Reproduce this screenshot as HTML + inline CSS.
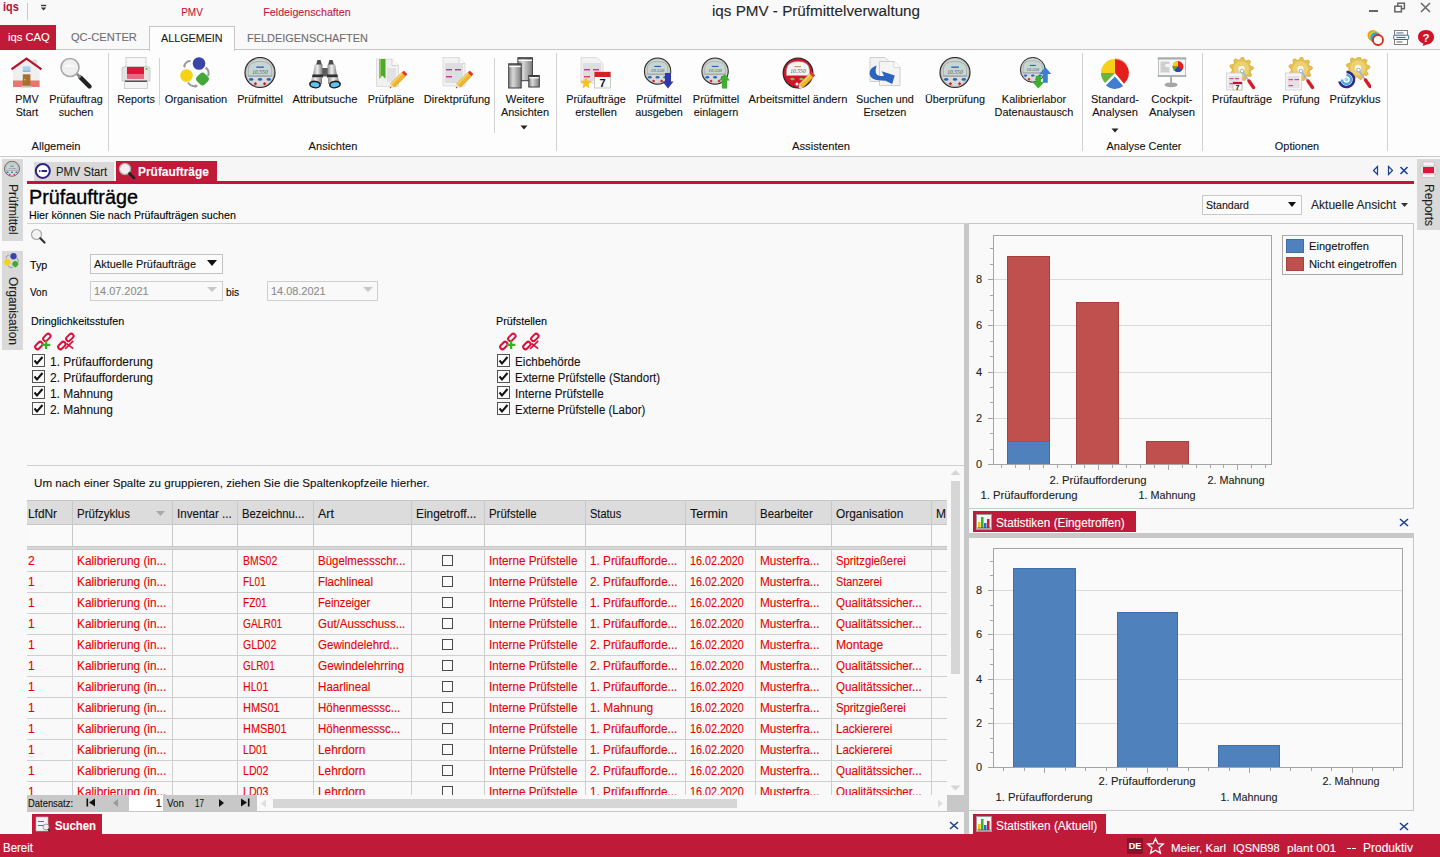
<!DOCTYPE html><html><head><meta charset="utf-8"><style>
html,body{margin:0;padding:0;}
body{width:1440px;height:857px;position:relative;overflow:hidden;background:#f9f9f9;font-family:"Liberation Sans", sans-serif;}
.t{position:absolute;white-space:nowrap;-webkit-text-stroke:0.1px currentColor;}
.r{position:absolute;}
</style></head><body>
<div class="r" style="left:0px;top:0px;width:1440px;height:49px;background:#f9f9f9;"></div>
<div class="r" style="left:0px;top:49px;width:1440px;height:1px;background:#c6c6c6;"></div>
<div class="r" style="left:0px;top:50px;width:1440px;height:106px;background:#fdfdfd;"></div>
<div class="r" style="left:0px;top:156px;width:1440px;height:1px;background:#c8c8c8;"></div>
<div class="t" style="left:2.8px;top:1.23px;font-size:12.000px;line-height:12.000px;color:#b01538;font-weight:bold;transform: scaleX(0.9052);transform-origin:left center;">iqs</div>
<div class="r" style="left:27px;top:3px;width:1px;height:17px;background:#c8c8c8;"></div>
<svg class="r" style="left:40px;top:4px;" width="8" height="8" viewBox="0 0 8 8"><rect x="1" y="0.8" width="5.2" height="1.4" fill="#333c44"/><path d="M0.8 3.6 H6.4 L3.6 6.6Z" fill="#333c44"/></svg>
<div class="t" style="left:192px;top:7.06px;font-size:11.000px;line-height:11.000px;color:#c01a39;transform:translateX(-50%) scaleX(0.9099);transform-origin:center center;">PMV</div>
<div class="t" style="left:307px;top:7.06px;font-size:11.000px;line-height:11.000px;color:#c01a39;transform:translateX(-50%) scaleX(0.9721);transform-origin:center center;">Feldeigenschaften</div>
<div class="t" style="left:815.8px;top:2.58px;font-size:15.200px;line-height:15.200px;color:#262626;transform:translateX(-50%) scaleX(1.0023);transform-origin:center center;">iqs PMV - Prüfmittelverwaltung</div>
<div class="r" style="left:1369px;top:10px;width:9px;height:2px;background:#666;"></div>
<svg class="r" style="left:1393px;top:1px;" width="14" height="12" viewBox="0 0 14 12"><rect x="4.8" y="2.2" width="6.6" height="5.5" fill="none" stroke="#666" stroke-width="1.5"/><rect x="1.8" y="5.2" width="6.6" height="5.6" fill="#f9f9f9" stroke="#666" stroke-width="1.5"/></svg>
<svg class="r" style="left:1420px;top:2px;" width="11" height="11" viewBox="0 0 11 11"><path d="M1 1 L10 10 M10 1 L1 10" stroke="#666" stroke-width="1.5"/></svg>
<svg class="r" style="left:1367px;top:29px;" width="18" height="18" viewBox="0 0 18 18"><circle cx="6" cy="6.5" r="5.5" fill="#f39c12"/><circle cx="7.5" cy="7.5" r="5.5" fill="#c4d42c"/><circle cx="8.8" cy="8.8" r="5.5" fill="#2fa8d8"/><circle cx="11" cy="11" r="5" fill="#fff" stroke="#e3261b" stroke-width="1.8"/></svg>
<svg class="r" style="left:1393px;top:29px;" width="17" height="17" viewBox="0 0 17 17"><rect x="1.5" y="1.5" width="13" height="14" fill="#fff" stroke="#808080" stroke-width="1"/><rect x="0.7" y="6.2" width="15" height="4.3" rx="1" fill="#eef4fb" stroke="#3a6494" stroke-width="1"/><rect x="3.5" y="3.5" width="7" height="0.9" fill="#555"/><rect x="3.5" y="8" width="9" height="0.9" fill="#555"/><rect x="3.5" y="12.5" width="6" height="0.9" fill="#555"/></svg>
<svg class="r" style="left:1417px;top:29px;" width="18" height="18" viewBox="0 0 18 18"><path d="M9 1 C14 1 17 4 17 8 C17 12 14 15 10 15.5 L5.5 17 L6.5 14.8 C3 13.5 1 11 1 8 C1 4 4 1 9 1Z" fill="#d3122a"/><text x="9" y="13" font-family="Liberation Sans" font-weight="bold" font-size="11.5" fill="#fff" text-anchor="middle">?</text></svg>
<div class="r" style="left:0px;top:25px;width:56px;height:25px;background:#c01a39;"></div>
<div class="t" style="left:7.7px;top:32.32px;font-size:11.300px;line-height:11.300px;color:#ffffff;transform: scaleX(0.9933);transform-origin:left center;">iqs CAQ</div>
<div class="t" style="left:70.8px;top:32.48px;font-size:11.100px;line-height:11.100px;color:#6e6e6e;transform: scaleX(0.9986);transform-origin:left center;">QC-CENTER</div>
<div class="r" style="left:149px;top:26px;width:86px;height:24px;background:#fdfdfd;box-sizing:border-box;border:1px solid #c6c6c6;border-bottom:none;height:25px;"></div>
<div class="t" style="left:160.8px;top:32.65px;font-size:10.900px;line-height:10.900px;color:#1a1a1a;transform: scaleX(0.9887);transform-origin:left center;">ALLGEMEIN</div>
<div class="t" style="left:246.7px;top:32.61px;font-size:10.950px;line-height:10.950px;color:#6e6e6e;transform: scaleX(0.9994);transform-origin:left center;">FELDEIGENSCHAFTEN</div>
<div class="r" style="left:108px;top:53px;width:1px;height:98px;background:#d2d2d2;"></div>
<div class="r" style="left:159px;top:58px;width:1px;height:47px;background:#d2d2d2;"></div>
<div class="r" style="left:494px;top:58px;width:1px;height:75px;background:#d2d2d2;"></div>
<div class="r" style="left:556px;top:53px;width:1px;height:98px;background:#d2d2d2;"></div>
<div class="r" style="left:1082px;top:53px;width:1px;height:98px;background:#d2d2d2;"></div>
<div class="r" style="left:1202px;top:53px;width:1px;height:98px;background:#d2d2d2;"></div>
<div class="r" style="left:1387px;top:53px;width:1px;height:98px;background:#d2d2d2;"></div>
<div class="t" style="left:56px;top:140.65px;font-size:11.500px;line-height:11.500px;color:#111;transform:translateX(-50%) scaleX(0.9721);transform-origin:center center;">Allgemein</div>
<div class="t" style="left:333px;top:140.65px;font-size:11.500px;line-height:11.500px;color:#111;transform:translateX(-50%) scaleX(0.9652);transform-origin:center center;">Ansichten</div>
<div class="t" style="left:821px;top:140.65px;font-size:11.500px;line-height:11.500px;color:#111;transform:translateX(-50%) scaleX(0.9754);transform-origin:center center;">Assistenten</div>
<div class="t" style="left:1143.5px;top:140.65px;font-size:11.500px;line-height:11.500px;color:#111;transform:translateX(-50%) scaleX(0.9539);transform-origin:center center;">Analyse Center</div>
<div class="t" style="left:1296.6px;top:140.65px;font-size:11.500px;line-height:11.500px;color:#111;transform:translateX(-50%) scaleX(0.9481);transform-origin:center center;">Optionen</div>
<svg class="r" style="left:11px;top:57px;" width="34" height="34" viewBox="0 0 34 34"><path d="M2 12.5 V30 H28.6 V12.5 L15.5 3Z" fill="#efefef"/>
<rect x="2" y="23.5" width="26.6" height="6.5" fill="#e9766c"/>
<rect x="21.5" y="2.5" width="4.5" height="6" fill="#dedede"/>
<path d="M0.5 12.3 L15.5 1.6 L30.5 12.3" fill="none" stroke="#b7142e" stroke-width="2.2" stroke-linejoin="miter"/>
<rect x="11.8" y="9.3" width="7.6" height="5.3" fill="#a5d4f2"/><rect x="11.8" y="13.6" width="7.6" height="1.2" fill="#9aa"/>
<rect x="11.8" y="17.3" width="7.6" height="11.5" fill="#a4712e"/><rect x="13.3" y="22" width="1" height="1.5" fill="#f0d040"/>
<rect x="10.5" y="28.8" width="10" height="1.8" fill="#c4c4c4"/></svg>
<div class="t" style="left:26.6px;top:94.15px;font-size:11.500px;line-height:11.500px;color:#111;transform:translateX(-50%) scaleX(0.9346);transform-origin:center center;">PMV</div>
<div class="t" style="left:26.6px;top:106.95px;font-size:11.500px;line-height:11.500px;color:#111;transform:translateX(-50%) scaleX(0.9346);transform-origin:center center;">Start</div>
<svg class="r" style="left:60px;top:57px;" width="34" height="34" viewBox="0 0 34 34"><circle cx="10" cy="10.5" r="9" fill="#efefef" stroke="#a9a9a9" stroke-width="1.6"/>
<path d="M3 10 Q10 4 17 10" fill="#fafafa" opacity="0.8"/>
<path d="M20.5 20.5 L29.5 29.5" stroke="#222" stroke-width="4.4" stroke-linecap="round"/>
<path d="M17 17 L20.5 20.5" stroke="#888" stroke-width="2.6"/></svg>
<div class="t" style="left:75.7px;top:94.15px;font-size:11.500px;line-height:11.500px;color:#111;transform:translateX(-50%) scaleX(0.9402);transform-origin:center center;">Prüfauftrag</div>
<div class="t" style="left:75.7px;top:106.95px;font-size:11.500px;line-height:11.500px;color:#111;transform:translateX(-50%) scaleX(0.9329);transform-origin:center center;">suchen</div>
<svg class="r" style="left:121px;top:57px;" width="34" height="34" viewBox="0 0 34 34"><rect x="5" y="0.5" width="20" height="11" fill="#f8f8f8" stroke="#c8c8c8" stroke-width="0.8"/>
<path d="M1 12 Q0 10 4 9.5 H26 Q30 10 29 12 V24 H1Z" fill="#e3e3e3" stroke="#c4c4c4" stroke-width="0.8"/>
<rect x="6" y="10" width="17" height="12" fill="#e0133a"/>
<rect x="6" y="17" width="17" height="5" fill="#e66a80"/>
<circle cx="25.5" cy="12" r="1" fill="#3bc43b"/>
<rect x="3.5" y="24" width="23" height="7.5" fill="#f4f4f4" stroke="#c8c8c8" stroke-width="0.8"/>
<rect x="4" y="23.5" width="22" height="1.5" fill="#555"/></svg>
<div class="t" style="left:136.2px;top:94.15px;font-size:11.500px;line-height:11.500px;color:#111;transform:translateX(-50%) scaleX(0.9310);transform-origin:center center;">Reports</div>
<svg class="r" style="left:180px;top:57px;" width="34" height="34" viewBox="0 0 34 34"><circle cx="19" cy="6.5" r="6.3" fill="#3a43a8"/>
<circle cx="6.5" cy="18.5" r="6.3" fill="#f5d214"/>
<rect x="17" y="16.5" width="11" height="11" rx="3.5" transform="rotate(45 22.5 22)" fill="#44a838"/>
<path d="M4 9 Q6 4 10.5 4" fill="none" stroke="#9a9a9a" stroke-width="2"/><path d="M3 9.5 L5 11 L6 8Z" fill="#9a9a9a"/>
<path d="M26 11 Q30 14 28 19" fill="none" stroke="#9a9a9a" stroke-width="2"/><path d="M24.5 11.5 L27 9.5 L27.5 12.5Z" fill="#9a9a9a"/>
<path d="M8 25.5 Q11 30 16 29" fill="none" stroke="#9a9a9a" stroke-width="2"/><path d="M15.5 27 L18 29 L15.5 31Z" fill="#9a9a9a"/></svg>
<div class="t" style="left:196.2px;top:94.15px;font-size:11.500px;line-height:11.500px;color:#111;transform:translateX(-50%) scaleX(0.9584);transform-origin:center center;">Organisation</div>
<svg class="r" style="left:244px;top:57px;" width="34" height="34" viewBox="0 0 34 34"><circle cx="16" cy="15.5" r="15" fill="#bdbdbd" stroke="#2c2c2c" stroke-width="1.2"/>
<circle cx="16" cy="15.5" r="13.3" fill="#dadada"/>
<path d="M4.2 18.8 V12.5 Q4.5 4.5 16 4.3 Q27.5 4.5 27.8 12.5 V18.8Z" fill="#c6d6d2" stroke="#8d9b97" stroke-width="0.7"/>
<rect x="12.3" y="9.5" width="7.5" height="1.3" fill="#2a5fb8"/>
<text x="16" y="16.6" font-family="Liberation Serif" font-size="5.6" text-anchor="middle" fill="#555" font-style="italic">10.550</text>
<rect x="4" y="18.8" width="24" height="1.2" fill="#a9a9a9"/>
<ellipse cx="7.2" cy="22.4" rx="2.2" ry="1.4" fill="#2368c4"/><ellipse cx="16" cy="22.4" rx="2.2" ry="1.4" fill="#2368c4"/><ellipse cx="24.8" cy="22.4" rx="2.2" ry="1.4" fill="#2368c4"/>
<rect x="10.2" y="25.5" width="2.5" height="2.5" transform="rotate(45 11.45 26.75)" fill="#d0202a"/><rect x="19.3" y="25.5" width="2.5" height="2.5" transform="rotate(45 20.55 26.75)" fill="#d0202a"/></svg>
<div class="t" style="left:260.1px;top:94.15px;font-size:11.500px;line-height:11.500px;color:#111;transform:translateX(-50%) scaleX(0.9408);transform-origin:center center;">Prüfmittel</div>
<svg class="r" style="left:309px;top:57px;" width="34" height="34" viewBox="0 0 34 34"><defs><linearGradient id="slv" x1="0" x2="1" y1="0" y2="0"><stop offset="0" stop-color="#8e8e8e"/><stop offset="0.45" stop-color="#f0f0f0"/><stop offset="1" stop-color="#7a7a7a"/></linearGradient></defs>
<path d="M8.5 3 L11.5 3 L13 8 L7 8Z" fill="#4a4a4a"/><path d="M20.5 3 L23.5 3 L25 8 L19 8Z" fill="#4a4a4a"/>
<rect x="12" y="11" width="8" height="8.5" fill="#5a5a5a"/>
<path d="M5.8 7.5 L13.5 7.5 L13.5 18.5 L4 18.5Z" fill="url(#slv)"/><path d="M18.5 7.5 L26.2 7.5 L28 18.5 L18.5 18.5Z" fill="url(#slv)"/>
<path d="M3.5 17.5 L14 17.5 L14 20.5 L3 20.5Z" fill="#2e2e2e"/><path d="M18 17.5 L28.5 17.5 L29 20.5 L18 20.5Z" fill="#2e2e2e"/>
<path d="M3 20.5 L13 20.5 L13 27 L1 27Z" fill="url(#slv)"/><path d="M19 20.5 L29 20.5 L31 27 L19 27Z" fill="url(#slv)"/>
<ellipse cx="6" cy="27.5" rx="6" ry="3.9" fill="#1c1c1c" transform="rotate(8 6 27.5)"/><ellipse cx="6" cy="27.7" rx="4.4" ry="2.4" fill="#5fc4f2" transform="rotate(8 6 27.7)"/>
<ellipse cx="26" cy="27.5" rx="6" ry="3.9" fill="#1c1c1c" transform="rotate(-8 26 27.5)"/><ellipse cx="26" cy="27.7" rx="4.4" ry="2.4" fill="#5fc4f2" transform="rotate(-8 26 27.7)"/></svg>
<div class="t" style="left:325px;top:94.15px;font-size:11.500px;line-height:11.500px;color:#111;transform:translateX(-50%) scaleX(0.9683);transform-origin:center center;">Attributsuche</div>
<svg class="r" style="left:376px;top:57px;" width="34" height="34" viewBox="0 0 34 34"><path d="M0.5 2 H16 L22.5 8.5 V29.5 H0.5Z" fill="#f1f1f1" stroke="#d6d6d6" stroke-width="0.8"/><path d="M16 2 V8.5 H22.5" fill="#fafafa" stroke="#ccc" stroke-width="0.8"/><rect x="11" y="11" width="9" height="14" fill="#e2e2e2"/><path d="M3 2 H9.5 V21.7 L6.25 18.5 L3 21.7Z" fill="#4faa2c"/><rect x="3" y="2" width="2" height="19" fill="#86c95a"/><g transform="translate(14.5,30.5) rotate(-45)"><rect x="3" y="-2.6" width="16" height="5.2" fill="#f2b62a" stroke="#c08a12" stroke-width="0.5"/><rect x="3" y="-2.6" width="16" height="1.6" fill="#f8d36a"/><path d="M3 -2.6 L-1 0 L3 2.6Z" fill="#f1d7a6"/><path d="M0.2 -0.8 L-1 0 L0.2 0.8Z" fill="#333"/><rect x="18.5" y="-2.6" width="3" height="5.2" rx="1" fill="#e0392b"/></g></svg>
<div class="t" style="left:390.8px;top:94.15px;font-size:11.500px;line-height:11.500px;color:#111;transform:translateX(-50%) scaleX(0.9445);transform-origin:center center;">Prüfpläne</div>
<svg class="r" style="left:441px;top:57px;" width="34" height="34" viewBox="0 0 34 34"><path d="M2 0.5 H18 L24 6.5 V29 H2Z" fill="#f2f2f2" stroke="#d6d6d6" stroke-width="0.8"/><path d="M18 0.5 V6.5 H24" fill="#fafafa" stroke="#ccc" stroke-width="0.8"/><rect x="4" y="6" width="18" height="20" fill="#dedede"/><rect x="5" y="12" width="6" height="1.4" fill="#cc3399"/><rect x="14" y="12" width="6" height="1.4" fill="#cc3399"/><rect x="5" y="19" width="6" height="1.4" fill="#cc3399"/><g transform="translate(15.5,30.5) rotate(-45)"><rect x="3" y="-2.6" width="16" height="5.2" fill="#f2b62a" stroke="#c08a12" stroke-width="0.5"/><rect x="3" y="-2.6" width="16" height="1.6" fill="#f8d36a"/><path d="M3 -2.6 L-1 0 L3 2.6Z" fill="#f1d7a6"/><path d="M0.2 -0.8 L-1 0 L0.2 0.8Z" fill="#333"/><rect x="18.5" y="-2.6" width="3" height="5.2" rx="1" fill="#e0392b"/></g></svg>
<div class="t" style="left:457.2px;top:94.15px;font-size:11.500px;line-height:11.500px;color:#111;transform:translateX(-50%) scaleX(0.9617);transform-origin:center center;">Direktprüfung</div>
<svg class="r" style="left:508px;top:57px;" width="34" height="34" viewBox="0 0 34 34"><defs><linearGradient id="wgr" x1="0" x2="1" y1="0" y2="0"><stop offset="0" stop-color="#8a8a8a"/><stop offset="0.35" stop-color="#d8d8d8"/><stop offset="1" stop-color="#7c7c7c"/></linearGradient></defs>
<rect x="9.9" y="0.7" width="14.5" height="23" fill="url(#wgr)" stroke="#3c3c3c" stroke-width="1"/><rect x="10.4" y="1.2" width="13.5" height="1.2" fill="#3c3c3c"/><rect x="10.4" y="2.6" width="13.5" height="1.4" fill="#fff"/>
<rect x="0.7" y="6.8" width="12.5" height="24.2" fill="url(#wgr)" stroke="#3c3c3c" stroke-width="1"/><rect x="1.2" y="7.3" width="11.5" height="1.2" fill="#3c3c3c"/><rect x="1.2" y="8.7" width="11.5" height="1.4" fill="#fff"/>
<rect x="20.8" y="18.5" width="10.5" height="11.5" fill="url(#wgr)" stroke="#3c3c3c" stroke-width="1"/><rect x="21.3" y="19" width="9.5" height="1" fill="#3c3c3c"/><rect x="21.3" y="20.2" width="9.5" height="1.2" fill="#fff"/></svg>
<div class="t" style="left:524.5px;top:94.15px;font-size:11.500px;line-height:11.500px;color:#111;transform:translateX(-50%) scaleX(0.9790);transform-origin:center center;">Weitere</div>
<div class="t" style="left:524.5px;top:106.95px;font-size:11.500px;line-height:11.500px;color:#111;transform:translateX(-50%) scaleX(0.9504);transform-origin:center center;">Ansichten</div>
<svg class="r" style="left:579px;top:57px;" width="34" height="34" viewBox="0 0 34 34"><path d="M2 0.5 H18 L24 6.5 V26 H2Z" fill="#f2f2f2" stroke="#d6d6d6" stroke-width="0.8"/><rect x="4" y="6" width="18" height="18" fill="#dedede"/><rect x="5" y="12" width="6" height="1.4" fill="#cc3399"/><rect x="14" y="12" width="6" height="1.4" fill="#cc3399"/><rect x="5" y="19" width="6" height="1.4" fill="#cc3399"/><rect x="15.5" y="15" width="16" height="16" fill="#fbfbfb" stroke="#bbb" stroke-width="0.8"/><rect x="15.5" y="15" width="16" height="5" fill="#d81f26"/><text x="23.5" y="30" font-family="Liberation Sans" font-weight="bold" font-size="11" text-anchor="middle" fill="#111">7</text><path d="M7 19 L8.5 23.5 L13 24 L9.5 27 L10.5 31.5 L7 29 L3.5 31.5 L4.5 27 L1 24 L5.5 23.5Z" fill="#f6c21c"/></svg>
<div class="t" style="left:595.5px;top:94.15px;font-size:11.500px;line-height:11.500px;color:#111;transform:translateX(-50%) scaleX(0.9416);transform-origin:center center;">Prüfaufträge</div>
<div class="t" style="left:595.5px;top:106.95px;font-size:11.500px;line-height:11.500px;color:#111;transform:translateX(-50%) scaleX(0.9593);transform-origin:center center;">erstellen</div>
<svg class="r" style="left:642px;top:57px;" width="34" height="34" viewBox="0 0 34 34"><g transform="translate(1.5,0.5) scale(0.88)"><circle cx="16" cy="15.5" r="15" fill="#bdbdbd" stroke="#2c2c2c" stroke-width="1.2"/>
<circle cx="16" cy="15.5" r="13.3" fill="#dadada"/>
<path d="M4.2 18.8 V12.5 Q4.5 4.5 16 4.3 Q27.5 4.5 27.8 12.5 V18.8Z" fill="#c6d6d2" stroke="#8d9b97" stroke-width="0.7"/>
<rect x="12.3" y="9.5" width="7.5" height="1.3" fill="#2a5fb8"/>
<text x="16" y="16.6" font-family="Liberation Serif" font-size="5.6" text-anchor="middle" fill="#555" font-style="italic">10.550</text>
<rect x="4" y="18.8" width="24" height="1.2" fill="#a9a9a9"/>
<ellipse cx="7.2" cy="22.4" rx="2.2" ry="1.4" fill="#2368c4"/><ellipse cx="16" cy="22.4" rx="2.2" ry="1.4" fill="#2368c4"/><ellipse cx="24.8" cy="22.4" rx="2.2" ry="1.4" fill="#2368c4"/>
<rect x="10.2" y="25.5" width="2.5" height="2.5" transform="rotate(45 11.45 26.75)" fill="#d0202a"/><rect x="19.3" y="25.5" width="2.5" height="2.5" transform="rotate(45 20.55 26.75)" fill="#d0202a"/></g><path d="M23 16 H29 V24.5 H31.5 L26 31.6 L20.5 24.5 H23Z" fill="#2f3aa6"/></svg>
<div class="t" style="left:659px;top:94.15px;font-size:11.500px;line-height:11.500px;color:#111;transform:translateX(-50%) scaleX(0.9367);transform-origin:center center;">Prüfmittel</div>
<div class="t" style="left:659px;top:106.95px;font-size:11.500px;line-height:11.500px;color:#111;transform:translateX(-50%) scaleX(0.9441);transform-origin:center center;">ausgeben</div>
<svg class="r" style="left:700px;top:57px;" width="34" height="34" viewBox="0 0 34 34"><g transform="translate(1,0.5) scale(0.88)"><circle cx="16" cy="15.5" r="15" fill="#bdbdbd" stroke="#2c2c2c" stroke-width="1.2"/>
<circle cx="16" cy="15.5" r="13.3" fill="#dadada"/>
<path d="M4.2 18.8 V12.5 Q4.5 4.5 16 4.3 Q27.5 4.5 27.8 12.5 V18.8Z" fill="#c6d6d2" stroke="#8d9b97" stroke-width="0.7"/>
<rect x="12.3" y="9.5" width="7.5" height="1.3" fill="#2a5fb8"/>
<text x="16" y="16.6" font-family="Liberation Serif" font-size="5.6" text-anchor="middle" fill="#555" font-style="italic">10.550</text>
<rect x="4" y="18.8" width="24" height="1.2" fill="#a9a9a9"/>
<ellipse cx="7.2" cy="22.4" rx="2.2" ry="1.4" fill="#2368c4"/><ellipse cx="16" cy="22.4" rx="2.2" ry="1.4" fill="#2368c4"/><ellipse cx="24.8" cy="22.4" rx="2.2" ry="1.4" fill="#2368c4"/>
<rect x="10.2" y="25.5" width="2.5" height="2.5" transform="rotate(45 11.45 26.75)" fill="#d0202a"/><rect x="19.3" y="25.5" width="2.5" height="2.5" transform="rotate(45 20.55 26.75)" fill="#d0202a"/></g><path d="M21.8 31.6 H27.2 V23.5 H30 L24.5 17 L19 23.5 H21.8Z" fill="#3fae2e"/></svg>
<div class="t" style="left:716.2px;top:94.15px;font-size:11.500px;line-height:11.500px;color:#111;transform:translateX(-50%) scaleX(0.9552);transform-origin:center center;">Prüfmittel</div>
<div class="t" style="left:716.2px;top:106.95px;font-size:11.500px;line-height:11.500px;color:#111;transform:translateX(-50%) scaleX(0.9405);transform-origin:center center;">einlagern</div>
<svg class="r" style="left:782px;top:57px;" width="34" height="34" viewBox="0 0 34 34"><circle cx="16" cy="16" r="14.8" fill="#d3142a" stroke="#2a2a2a" stroke-width="1.3"/>
<path d="M4.5 18.5 V13 Q5 4.5 16 4.5 Q27 4.5 27.5 13 V18.5Z" fill="#f7f3f3" stroke="#9fb0aa" stroke-width="0.6"/>
<rect x="12.5" y="9" width="6.5" height="1.2" fill="#c79a5a"/>
<text x="16" y="16.2" font-family="Liberation Serif" font-size="5.6" text-anchor="middle" fill="#555" font-style="italic">10.550</text>
<ellipse cx="10.5" cy="22" rx="2.2" ry="1.2" fill="#7cc04a"/><ellipse cx="19.5" cy="22" rx="2.2" ry="1.2" fill="#7cc04a"/><circle cx="15" cy="27" r="1.6" fill="#f2f7f2"/><g transform="translate(17,31) rotate(-45)"><rect x="3" y="-2.6" width="15" height="5.2" fill="#f2b62a" stroke="#c08a12" stroke-width="0.5"/><rect x="3" y="-2.6" width="15" height="1.6" fill="#f8d36a"/><path d="M3 -2.6 L-1 0 L3 2.6Z" fill="#f1d7a6"/><path d="M0.2 -0.8 L-1 0 L0.2 0.8Z" fill="#333"/><rect x="17.5" y="-2.6" width="3" height="5.2" rx="1" fill="#e0392b"/></g></svg>
<div class="t" style="left:798.1px;top:94.15px;font-size:11.500px;line-height:11.500px;color:#111;transform:translateX(-50%) scaleX(0.9656);transform-origin:center center;">Arbeitsmittel ändern</div>
<svg class="r" style="left:869px;top:57px;" width="34" height="34" viewBox="0 0 34 34"><path d="M1 0.5 H16 L20.5 5 V24.5 H1Z" fill="#f2f2f2" stroke="#c4c4c4" stroke-width="0.8"/>
<path d="M10.5 4.5 H25 L31 10.5 V28.5 H10.5Z" fill="#f4f4f4" stroke="#c4c4c4" stroke-width="0.8"/><path d="M25 4.5 V10.5 H31" fill="#fff" stroke="#c4c4c4" stroke-width="0.6"/>
<path d="M7.5 8.5 Q0 11 0.5 17 Q2 23.5 12 23.5 L16.5 23.8 L23.2 27 L25.7 18.6 L12.7 14.2 L15 19 L11 19 Q4.5 18.5 7.5 8.5Z" fill="#2a64be"/></svg>
<div class="t" style="left:885.3px;top:94.15px;font-size:11.500px;line-height:11.500px;color:#111;transform:translateX(-50%) scaleX(0.9407);transform-origin:center center;">Suchen und</div>
<div class="t" style="left:885.3px;top:106.95px;font-size:11.500px;line-height:11.500px;color:#111;transform:translateX(-50%) scaleX(0.9419);transform-origin:center center;">Ersetzen</div>
<svg class="r" style="left:939px;top:57px;" width="34" height="34" viewBox="0 0 34 34"><circle cx="16" cy="15.5" r="15" fill="#bdbdbd" stroke="#2c2c2c" stroke-width="1.2"/>
<circle cx="16" cy="15.5" r="13.3" fill="#dadada"/>
<path d="M4.2 18.8 V12.5 Q4.5 4.5 16 4.3 Q27.5 4.5 27.8 12.5 V18.8Z" fill="#c6d6d2" stroke="#8d9b97" stroke-width="0.7"/>
<rect x="12.3" y="9.5" width="7.5" height="1.3" fill="#2a5fb8"/>
<text x="16" y="16.6" font-family="Liberation Serif" font-size="5.6" text-anchor="middle" fill="#555" font-style="italic">10.550</text>
<rect x="4" y="18.8" width="24" height="1.2" fill="#a9a9a9"/>
<ellipse cx="7.2" cy="22.4" rx="2.2" ry="1.4" fill="#2368c4"/><ellipse cx="16" cy="22.4" rx="2.2" ry="1.4" fill="#2368c4"/><ellipse cx="24.8" cy="22.4" rx="2.2" ry="1.4" fill="#2368c4"/>
<rect x="10.2" y="25.5" width="2.5" height="2.5" transform="rotate(45 11.45 26.75)" fill="#d0202a"/><rect x="19.3" y="25.5" width="2.5" height="2.5" transform="rotate(45 20.55 26.75)" fill="#d0202a"/></svg>
<div class="t" style="left:954.5px;top:94.15px;font-size:11.500px;line-height:11.500px;color:#111;transform:translateX(-50%) scaleX(0.9384);transform-origin:center center;">Überprüfung</div>
<svg class="r" style="left:1019px;top:57px;" width="34" height="34" viewBox="0 0 34 34"><g transform="translate(0.5,0) scale(0.83)"><circle cx="16" cy="15.5" r="15" fill="#bdbdbd" stroke="#2c2c2c" stroke-width="1.2"/>
<circle cx="16" cy="15.5" r="13.3" fill="#dadada"/>
<path d="M4.2 18.8 V12.5 Q4.5 4.5 16 4.3 Q27.5 4.5 27.8 12.5 V18.8Z" fill="#c6d6d2" stroke="#8d9b97" stroke-width="0.7"/>
<rect x="12.3" y="9.5" width="7.5" height="1.3" fill="#2a5fb8"/>
<text x="16" y="16.6" font-family="Liberation Serif" font-size="5.6" text-anchor="middle" fill="#555" font-style="italic">10.550</text>
<rect x="4" y="18.8" width="24" height="1.2" fill="#a9a9a9"/>
<ellipse cx="7.2" cy="22.4" rx="2.2" ry="1.4" fill="#2368c4"/><ellipse cx="16" cy="22.4" rx="2.2" ry="1.4" fill="#2368c4"/><ellipse cx="24.8" cy="22.4" rx="2.2" ry="1.4" fill="#2368c4"/>
<rect x="10.2" y="25.5" width="2.5" height="2.5" transform="rotate(45 11.45 26.75)" fill="#d0202a"/><rect x="19.3" y="25.5" width="2.5" height="2.5" transform="rotate(45 20.55 26.75)" fill="#d0202a"/></g><path d="M23.8 25.7 H28.8 V17 H32.2 L26.3 9.9 L20.4 17 H23.8Z" fill="#3a7fd0"/><path d="M16.8 18.8 H21.9 V25 H25.3 L19.35 31.6 L13.4 25 H16.8Z" fill="#3fae2e"/></svg>
<div class="t" style="left:1034.4px;top:94.15px;font-size:11.500px;line-height:11.500px;color:#111;transform:translateX(-50%) scaleX(0.9482);transform-origin:center center;">Kalibrierlabor</div>
<div class="t" style="left:1034.4px;top:106.95px;font-size:11.500px;line-height:11.500px;color:#111;transform:translateX(-50%) scaleX(0.9474);transform-origin:center center;">Datenaustausch</div>
<svg class="r" style="left:1100px;top:57px;" width="34" height="34" viewBox="0 0 34 34"><path d="M15 16 L15 2 A14 14 0 0 1 24 26.72Z" fill="#e3201b"/>
<path d="M15 16 L5.1 25.9 A14 14 0 0 1 1 16Z" fill="#6ab43e"/>
<path d="M15 16 L1 16 A14 14 0 0 1 15 2Z" fill="#f7d117"/>
<path d="M15 18.5 L24 29.2 A14 14 0 0 1 5.1 28.4Z" fill="#3f7ed0" stroke="#fff" stroke-width="1.2" stroke-linejoin="round"/>
<path d="M15 2 A14 14 0 0 1 27 9" fill="none" stroke="#f06a5e" stroke-width="1.5" opacity="0.6"/></svg>
<div class="t" style="left:1114.8px;top:94.15px;font-size:11.500px;line-height:11.500px;color:#111;transform:translateX(-50%) scaleX(0.9454);transform-origin:center center;">Standard-</div>
<div class="t" style="left:1114.8px;top:106.95px;font-size:11.500px;line-height:11.500px;color:#111;transform:translateX(-50%) scaleX(0.9669);transform-origin:center center;">Analysen</div>
<svg class="r" style="left:1157px;top:57px;" width="34" height="34" viewBox="0 0 34 34"><rect x="1.5" y="1" width="27" height="18" fill="#f3f8fb" stroke="#b9b9b9" stroke-width="0.9"/>
<rect x="0.5" y="0.5" width="29" height="2" rx="1" fill="#a9a9a9"/><rect x="0.5" y="18" width="29" height="2" rx="1" fill="#b3b3b3"/>
<rect x="3.5" y="4.5" width="9" height="11" fill="#cfcfcf"/><rect x="8.5" y="7" width="4" height="3" fill="#f3f8fb"/>
<circle cx="21" cy="9.5" r="5.4" fill="#e3201b"/><path d="M21 9.5 L21 4.1 A5.4 5.4 0 0 0 15.6 9.5Z" fill="#f7d117"/><path d="M21 9.5 L15.6 9.5 A5.4 5.4 0 0 0 17.5 13.7Z" fill="#4aa838"/><path d="M21 9.5 L17.5 13.7 A5.4 5.4 0 0 0 25.2 12.9Z" fill="#2c44b0"/>
<rect x="13.2" y="20" width="1.8" height="7" fill="#a8a8a8"/><ellipse cx="14.1" cy="27.8" rx="6.5" ry="2.4" fill="#a5a5a5"/></svg>
<div class="t" style="left:1172px;top:94.15px;font-size:11.500px;line-height:11.500px;color:#111;transform:translateX(-50%) scaleX(0.9779);transform-origin:center center;">Cockpit-</div>
<div class="t" style="left:1172px;top:106.95px;font-size:11.500px;line-height:11.500px;color:#111;transform:translateX(-50%) scaleX(0.9774);transform-origin:center center;">Analysen</div>
<svg class="r" style="left:1226px;top:57px;" width="34" height="34" viewBox="0 0 34 34"><polygon points="15.50,0.20 17.55,0.38 18.65,3.35 20.10,4.03 23.08,2.96 24.54,4.42 23.47,7.40 24.15,8.85 27.12,9.95 27.30,12.00 24.56,13.60 24.15,15.15 25.72,17.90 24.54,19.58 21.41,19.05 20.10,19.97 19.54,23.09 17.55,23.62 15.50,21.20 13.90,21.06 11.46,23.09 9.60,22.22 9.59,19.05 8.45,17.91 5.28,17.90 4.41,16.04 6.44,13.60 6.30,12.00 3.88,9.95 4.41,7.96 7.53,7.40 8.45,6.09 7.92,2.96 9.60,1.78 12.35,3.35 13.90,2.94" fill="#e4c150" stroke="#d4ac3a" stroke-width="0.8" stroke-linejoin="round"/><circle cx="15.5" cy="12" r="7.699999999999999" fill="#ecd173"/><circle cx="15.5" cy="12" r="3.2" fill="#fbf6e4"/><rect x="0.5" y="16" width="15.5" height="17" fill="#f4f4f4" stroke="#cfcfcf" stroke-width="0.8"/><rect x="2.5" y="19" width="11" height="12" fill="#e2e2e2"/><rect x="3.5" y="21" width="4" height="1.2" fill="#d04aa0"/><rect x="9" y="21" width="4" height="1.2" fill="#d04aa0"/><rect x="3.5" y="26" width="4" height="1.2" fill="#d04aa0"/><rect x="7" y="25" width="9" height="8" fill="#fafafa" stroke="#aaa" stroke-width="0.6"/><rect x="7" y="25" width="9" height="2.2" fill="#c8102e"/><text x="11.5" y="32.6" font-family="Liberation Sans" font-weight="bold" font-size="7" text-anchor="middle" fill="#111">7</text><path d="M16 14 L23 24" stroke="#9fb3d6" stroke-width="1.6"/><path d="M23 24 L27.5 30.5" stroke="#d61c24" stroke-width="3.4" stroke-linecap="round"/><circle cx="16" cy="14" r="1.8" fill="#fff" stroke="#9fb3d6" stroke-width="1"/></svg>
<div class="t" style="left:1242px;top:94.15px;font-size:11.500px;line-height:11.500px;color:#111;transform:translateX(-50%) scaleX(0.9479);transform-origin:center center;">Prüfaufträge</div>
<svg class="r" style="left:1285px;top:57px;" width="34" height="34" viewBox="0 0 34 34"><polygon points="15.50,0.20 17.55,0.38 18.65,3.35 20.10,4.03 23.08,2.96 24.54,4.42 23.47,7.40 24.15,8.85 27.12,9.95 27.30,12.00 24.56,13.60 24.15,15.15 25.72,17.90 24.54,19.58 21.41,19.05 20.10,19.97 19.54,23.09 17.55,23.62 15.50,21.20 13.90,21.06 11.46,23.09 9.60,22.22 9.59,19.05 8.45,17.91 5.28,17.90 4.41,16.04 6.44,13.60 6.30,12.00 3.88,9.95 4.41,7.96 7.53,7.40 8.45,6.09 7.92,2.96 9.60,1.78 12.35,3.35 13.90,2.94" fill="#e4c150" stroke="#d4ac3a" stroke-width="0.8" stroke-linejoin="round"/><circle cx="15.5" cy="12" r="7.699999999999999" fill="#ecd173"/><circle cx="15.5" cy="12" r="3.2" fill="#fbf6e4"/><rect x="0.5" y="16" width="16" height="17" fill="#f4f4f4" stroke="#cfcfcf" stroke-width="0.8"/><rect x="2.5" y="19" width="12" height="12" fill="#e2e2e2"/><rect x="3.5" y="22" width="4.5" height="1.2" fill="#d04aa0"/><rect x="9.5" y="22" width="4.5" height="1.2" fill="#d04aa0"/><rect x="3.5" y="28" width="4.5" height="1.2" fill="#d04aa0"/><path d="M16 14 L23 24" stroke="#9fb3d6" stroke-width="1.6"/><path d="M23 24 L27.5 30.5" stroke="#d61c24" stroke-width="3.4" stroke-linecap="round"/><circle cx="16" cy="14" r="1.8" fill="#fff" stroke="#9fb3d6" stroke-width="1"/></svg>
<div class="t" style="left:1300.75px;top:94.15px;font-size:11.500px;line-height:11.500px;color:#111;transform:translateX(-50%) scaleX(0.9310);transform-origin:center center;">Prüfung</div>
<svg class="r" style="left:1337px;top:57px;" width="34" height="34" viewBox="0 0 34 34"><polygon points="21.00,-0.80 23.05,-0.62 24.15,2.35 25.60,3.03 28.58,1.96 30.04,3.42 28.97,6.40 29.65,7.85 32.62,8.95 32.80,11.00 30.06,12.60 29.65,14.15 31.22,16.90 30.04,18.58 26.91,18.05 25.60,18.97 25.04,22.09 23.05,22.62 21.00,20.20 19.40,20.06 16.96,22.09 15.10,21.22 15.09,18.05 13.95,16.91 10.78,16.90 9.91,15.04 11.94,12.60 11.80,11.00 9.38,8.95 9.91,6.96 13.03,6.40 13.95,5.09 13.42,1.96 15.10,0.78 17.85,2.35 19.40,1.94" fill="#e4c150" stroke="#d4ac3a" stroke-width="0.8" stroke-linejoin="round"/><circle cx="21" cy="11" r="7.699999999999999" fill="#ecd173"/><circle cx="21" cy="11" r="3.2" fill="#fbf6e4"/><circle cx="9.5" cy="22.5" r="7.5" fill="#fff"/><path d="M9.5 15 A7.5 7.5 0 1 1 2.3 24.5" fill="none" stroke="#2d2a8c" stroke-width="2.6"/><path d="M9.5 18 A4.5 4.5 0 1 1 5 22.5" fill="none" stroke="#4aa8d8" stroke-width="2.4"/><circle cx="9.5" cy="22.5" r="2" fill="#9fd8ea"/><path d="M21.5 13 L28.5 23" stroke="#9fb3d6" stroke-width="1.6"/><path d="M28.5 23 L33.0 29.5" stroke="#d61c24" stroke-width="3.4" stroke-linecap="round"/><circle cx="21.5" cy="13" r="1.8" fill="#fff" stroke="#9fb3d6" stroke-width="1"/></svg>
<div class="t" style="left:1354.5px;top:94.15px;font-size:11.500px;line-height:11.500px;color:#111;transform:translateX(-50%) scaleX(0.9613);transform-origin:center center;">Prüfzyklus</div>
<svg class="r" style="left:520px;top:125px;" width="8" height="5" viewBox="0 0 8 5"><path d="M0.5 0.5 H7.5 L4 4.5Z" fill="#222"/></svg>
<svg class="r" style="left:1111px;top:128px;" width="8" height="5" viewBox="0 0 8 5"><path d="M0.5 0.5 H7.5 L4 4.5Z" fill="#222"/></svg>
<div class="r" style="left:0px;top:157px;width:1440px;height:677px;background:#f9f9f9;"></div>
<div class="r" style="left:24px;top:157px;width:1393px;height:24px;background:#f6f6f6;"></div>
<div class="r" style="left:2px;top:159px;width:21px;height:82px;background:#d9d9d9;"></div>
<svg class="r" style="left:4px;top:161px;" width="17" height="17" viewBox="0 0 34 34"><circle cx="16" cy="15.5" r="15" fill="#bdbdbd" stroke="#2c2c2c" stroke-width="1.2"/>
<circle cx="16" cy="15.5" r="13.3" fill="#dadada"/>
<path d="M4.2 18.8 V12.5 Q4.5 4.5 16 4.3 Q27.5 4.5 27.8 12.5 V18.8Z" fill="#c6d6d2" stroke="#8d9b97" stroke-width="0.7"/>
<rect x="12.3" y="9.5" width="7.5" height="1.3" fill="#2a5fb8"/>
<text x="16" y="16.6" font-family="Liberation Serif" font-size="5.6" text-anchor="middle" fill="#555" font-style="italic">10.550</text>
<rect x="4" y="18.8" width="24" height="1.2" fill="#a9a9a9"/>
<ellipse cx="7.2" cy="22.4" rx="2.2" ry="1.4" fill="#2368c4"/><ellipse cx="16" cy="22.4" rx="2.2" ry="1.4" fill="#2368c4"/><ellipse cx="24.8" cy="22.4" rx="2.2" ry="1.4" fill="#2368c4"/>
<rect x="10.2" y="25.5" width="2.5" height="2.5" transform="rotate(45 11.45 26.75)" fill="#d0202a"/><rect x="19.3" y="25.5" width="2.5" height="2.5" transform="rotate(45 20.55 26.75)" fill="#d0202a"/></svg>
<div class="t" style="left:12.5px;top:184px;font-size:12px;line-height:12px;color:#1e1e1e;transform-origin:0 0;transform:translateX(6px) rotate(90deg);">Prüfmittel</div>
<div class="r" style="left:2px;top:251px;width:21px;height:99px;background:#d9d9d9;"></div>
<svg class="r" style="left:4px;top:253px;" width="17" height="17" viewBox="0 0 34 34"><circle cx="19" cy="6.5" r="6.3" fill="#3a43a8"/>
<circle cx="6.5" cy="18.5" r="6.3" fill="#f5d214"/>
<rect x="17" y="16.5" width="11" height="11" rx="3.5" transform="rotate(45 22.5 22)" fill="#44a838"/>
<path d="M4 9 Q6 4 10.5 4" fill="none" stroke="#9a9a9a" stroke-width="2"/><path d="M3 9.5 L5 11 L6 8Z" fill="#9a9a9a"/>
<path d="M26 11 Q30 14 28 19" fill="none" stroke="#9a9a9a" stroke-width="2"/><path d="M24.5 11.5 L27 9.5 L27.5 12.5Z" fill="#9a9a9a"/>
<path d="M8 25.5 Q11 30 16 29" fill="none" stroke="#9a9a9a" stroke-width="2"/><path d="M15.5 27 L18 29 L15.5 31Z" fill="#9a9a9a"/></svg>
<div class="t" style="left:12.5px;top:277px;font-size:12px;line-height:12px;color:#1e1e1e;transform-origin:0 0;transform:translateX(6px) rotate(90deg);">Organisation</div>
<div class="r" style="left:1417px;top:159px;width:23px;height:71px;background:#d9d9d9;"></div>
<svg class="r" style="left:1419px;top:161px;" width="19" height="17" viewBox="0 0 19 17"><rect x="4" y="1" width="11" height="6" fill="#f7f7f7" stroke="#bbb" stroke-width="0.6"/><rect x="1" y="5" width="17" height="8" rx="1.5" fill="#e3e3e3" stroke="#bbb" stroke-width="0.6"/><rect x="4" y="6" width="11" height="6" fill="#e0133a"/><rect x="3" y="13" width="13" height="3.5" fill="#f4f4f4" stroke="#bbb" stroke-width="0.6"/></svg>
<div class="t" style="left:1428.5px;top:184px;font-size:12px;line-height:12px;color:#1e1e1e;transform-origin:0 0;transform:translateX(6px) rotate(90deg);">Reports</div>
<div class="r" style="left:34px;top:162px;width:80px;height:19px;background:#d9d9d9;"></div>
<svg class="r" style="left:34px;top:162px;" width="18" height="18" viewBox="0 0 18 18"><circle cx="8.8" cy="8.9" r="7" fill="#fff" stroke="#2a2286" stroke-width="2"/><rect x="5" y="8.3" width="1.5" height="1.6" fill="#2a2286"/><rect x="7.5" y="8" width="5.5" height="2" fill="#2a2286"/></svg>
<div class="t" style="left:55.5px;top:166.03px;font-size:12.000px;line-height:12.000px;color:#1e1e1e;transform: scaleX(0.9362);transform-origin:left center;">PMV Start</div>
<div class="r" style="left:116px;top:161px;width:101px;height:20px;background:#c01a39;"></div>
<svg class="r" style="left:118px;top:162px;" width="18" height="18" viewBox="0 0 18 18"><circle cx="7" cy="7" r="5.6" fill="#efefef" stroke="#a9a9a9" stroke-width="1.2"/><path d="M11.5 11.5 L16 16" stroke="#222" stroke-width="2.6" stroke-linecap="round"/></svg>
<div class="t" style="left:138.3px;top:166.03px;font-size:12.000px;line-height:12.000px;color:#ffffff;font-weight:bold;transform: scaleX(0.9938);transform-origin:left center;">Prüfaufträge</div>
<div class="r" style="left:27px;top:181px;width:1387px;height:3px;background:#c0143a;"></div>
<svg class="r" style="left:1371px;top:165px;" width="40" height="11" viewBox="0 0 40 11"><path d="M6.5 1.5 L2.5 5.5 L6.5 9.5Z" fill="none" stroke="#1d3f8f" stroke-width="1.2"/><path d="M17.5 1.5 L21.5 5.5 L17.5 9.5Z" fill="none" stroke="#1d3f8f" stroke-width="1.2"/><path d="M29.5 2 L36.5 9 M36.5 2 L29.5 9" stroke="#1d3f8f" stroke-width="1.6"/></svg>
<div class="t" style="left:29px;top:186.57px;font-size:20.500px;line-height:20.500px;color:#000;transform: scaleX(0.9661);transform-origin:left center;-webkit-text-stroke:0.35px #000;">Prüfaufträge</div>
<div class="t" style="left:29px;top:209.90px;font-size:10.600px;line-height:10.600px;color:#000;transform: scaleX(1.0065);transform-origin:left center;">Hier können Sie nach Prüfaufträgen suchen</div>
<div class="r" style="left:27px;top:223px;width:1386px;height:1px;background:#cfcfcf;"></div>
<div class="r" style="left:1202px;top:195px;width:100px;height:20px;background:#fbfbfb;box-sizing:border-box;border:1px solid #c9c9c9;"></div>
<div class="t" style="left:1206px;top:199.86px;font-size:11.000px;line-height:11.000px;color:#111;transform: scaleX(0.9632);transform-origin:left center;">Standard</div>
<svg class="r" style="left:1288px;top:202px;" width="8" height="5" viewBox="0 0 8 5"><path d="M0 0 H8 L4 5Z" fill="#111"/></svg>
<div class="t" style="left:1310.7px;top:199.03px;font-size:12.000px;line-height:12.000px;color:#1e1e1e;transform: scaleX(1.0033);transform-origin:left center;">Aktuelle Ansicht</div>
<svg class="r" style="left:1401px;top:203px;" width="7" height="4" viewBox="0 0 7 4"><path d="M0 0 H7 L3.5 4Z" fill="#333"/></svg>
<svg class="r" style="left:30px;top:228px;" width="16" height="16" viewBox="0 0 16 16"><circle cx="6.5" cy="6.5" r="5" fill="#f3f3f3" stroke="#a9a9a9" stroke-width="1.2"/><path d="M10.3 10.3 L14.5 14.5" stroke="#333" stroke-width="2.2" stroke-linecap="round"/></svg>
<div class="r" style="left:964px;top:224px;width:5px;height:610px;background:#c8c8c8;"></div>
<div class="t" style="left:30px;top:260.16px;font-size:11.000px;line-height:11.000px;color:#000;transform: scaleX(0.9700);transform-origin:left center;">Typ</div>
<div class="r" style="left:90px;top:254px;width:133px;height:20px;background:#fbfbfb;box-sizing:border-box;border:1px solid #c3c3c3;"></div>
<div class="t" style="left:93.9px;top:259.36px;font-size:11.000px;line-height:11.000px;color:#111;transform: scaleX(0.9928);transform-origin:left center;">Aktuelle Prüfaufträge</div>
<svg class="r" style="left:207px;top:260px;" width="10" height="7" viewBox="0 0 10 7"><path d="M0 0 H10 L5 6Z" fill="#111"/></svg>
<div class="t" style="left:30px;top:287.36px;font-size:11.000px;line-height:11.000px;color:#000;transform: scaleX(0.9063);transform-origin:left center;">Von</div>
<div class="r" style="left:90px;top:281px;width:133px;height:20px;background:#f9f9f9;box-sizing:border-box;border:1px solid #cfcfcf;"></div>
<div class="t" style="left:93.9px;top:286.36px;font-size:11.000px;line-height:11.000px;color:#8c8c8c;transform: scaleX(0.9917);transform-origin:left center;">14.07.2021</div>
<svg class="r" style="left:207px;top:287px;" width="10" height="6" viewBox="0 0 10 6"><path d="M0 0 H10 L5 5Z" fill="#c8c8c8"/></svg>
<div class="t" style="left:226px;top:287.36px;font-size:11.000px;line-height:11.000px;color:#000;transform: scaleX(0.9243);transform-origin:left center;">bis</div>
<div class="r" style="left:267px;top:281px;width:111px;height:20px;background:#f9f9f9;box-sizing:border-box;border:1px solid #cfcfcf;"></div>
<div class="t" style="left:270.7px;top:286.36px;font-size:11.000px;line-height:11.000px;color:#8c8c8c;transform: scaleX(0.9917);transform-origin:left center;">14.08.2021</div>
<svg class="r" style="left:363px;top:287px;" width="10" height="6" viewBox="0 0 10 6"><path d="M0 0 H10 L5 5Z" fill="#c8c8c8"/></svg>
<div class="t" style="left:31px;top:315.86px;font-size:11.000px;line-height:11.000px;color:#000;transform: scaleX(0.9772);transform-origin:left center;">Dringlichkeitsstufen</div>
<svg class="r" style="left:35px;top:334px;overflow:visible;" width="18" height="17" viewBox="0 0 18 17"><g fill="none" stroke="#d8103c" stroke-width="2"><rect x="7.6" y="1.1" width="8.5" height="4.6" rx="2.3" transform="rotate(-45 11.85 3.4)"/><rect x="-0.4" y="9.2" width="8.5" height="4.6" rx="2.3" transform="rotate(-45 3.85 11.5)"/></g><path d="M6.9 10.9 H15.3 M11.1 6.7 V15.1" stroke="#3cae22" stroke-width="2.3"/></svg>
<svg class="r" style="left:58px;top:334px;overflow:visible;" width="18" height="17" viewBox="0 0 18 17"><g fill="none" stroke="#d8103c" stroke-width="2"><rect x="7.6" y="1.1" width="8.5" height="4.6" rx="2.3" transform="rotate(-45 11.85 3.4)"/><rect x="-0.4" y="9.2" width="8.5" height="4.6" rx="2.3" transform="rotate(-45 3.85 11.5)"/></g><path d="M7.2 14.9 L15.2 6.9 M8.5 9.5 L15.2 14.7" stroke="#d8103c" stroke-width="1.6"/></svg>
<svg class="r" style="left:32px;top:354px;" width="13" height="13" viewBox="0 0 13 13"><rect x="0.5" y="0.5" width="12" height="12" fill="#fbfbfb" stroke="#555" stroke-width="1"/><path d="M2.5 6.5 L5 9.5 L10.5 3" fill="none" stroke="#111" stroke-width="2"/></svg>
<div class="t" style="left:50.4px;top:356.03px;font-size:12.000px;line-height:12.000px;color:#111;transform: scaleX(0.9982);transform-origin:left center;">1. Prüfaufforderung</div>
<svg class="r" style="left:32px;top:370px;" width="13" height="13" viewBox="0 0 13 13"><rect x="0.5" y="0.5" width="12" height="12" fill="#fbfbfb" stroke="#555" stroke-width="1"/><path d="M2.5 6.5 L5 9.5 L10.5 3" fill="none" stroke="#111" stroke-width="2"/></svg>
<div class="t" style="left:50.4px;top:372.03px;font-size:12.000px;line-height:12.000px;color:#111;transform: scaleX(0.9982);transform-origin:left center;">2. Prüfaufforderung</div>
<svg class="r" style="left:32px;top:386px;" width="13" height="13" viewBox="0 0 13 13"><rect x="0.5" y="0.5" width="12" height="12" fill="#fbfbfb" stroke="#555" stroke-width="1"/><path d="M2.5 6.5 L5 9.5 L10.5 3" fill="none" stroke="#111" stroke-width="2"/></svg>
<div class="t" style="left:50.4px;top:388.03px;font-size:12.000px;line-height:12.000px;color:#111;transform: scaleX(0.9923);transform-origin:left center;">1. Mahnung</div>
<svg class="r" style="left:32px;top:402px;" width="13" height="13" viewBox="0 0 13 13"><rect x="0.5" y="0.5" width="12" height="12" fill="#fbfbfb" stroke="#555" stroke-width="1"/><path d="M2.5 6.5 L5 9.5 L10.5 3" fill="none" stroke="#111" stroke-width="2"/></svg>
<div class="t" style="left:50.4px;top:404.03px;font-size:12.000px;line-height:12.000px;color:#111;transform: scaleX(0.9923);transform-origin:left center;">2. Mahnung</div>
<div class="t" style="left:496px;top:315.86px;font-size:11.000px;line-height:11.000px;color:#000;transform: scaleX(0.9812);transform-origin:left center;">Prüfstellen</div>
<svg class="r" style="left:500px;top:334px;overflow:visible;" width="18" height="17" viewBox="0 0 18 17"><g fill="none" stroke="#d8103c" stroke-width="2"><rect x="7.6" y="1.1" width="8.5" height="4.6" rx="2.3" transform="rotate(-45 11.85 3.4)"/><rect x="-0.4" y="9.2" width="8.5" height="4.6" rx="2.3" transform="rotate(-45 3.85 11.5)"/></g><path d="M6.9 10.9 H15.3 M11.1 6.7 V15.1" stroke="#3cae22" stroke-width="2.3"/></svg>
<svg class="r" style="left:523px;top:334px;overflow:visible;" width="18" height="17" viewBox="0 0 18 17"><g fill="none" stroke="#d8103c" stroke-width="2"><rect x="7.6" y="1.1" width="8.5" height="4.6" rx="2.3" transform="rotate(-45 11.85 3.4)"/><rect x="-0.4" y="9.2" width="8.5" height="4.6" rx="2.3" transform="rotate(-45 3.85 11.5)"/></g><path d="M7.2 14.9 L15.2 6.9 M8.5 9.5 L15.2 14.7" stroke="#d8103c" stroke-width="1.6"/></svg>
<svg class="r" style="left:497px;top:354px;" width="13" height="13" viewBox="0 0 13 13"><rect x="0.5" y="0.5" width="12" height="12" fill="#fbfbfb" stroke="#555" stroke-width="1"/><path d="M2.5 6.5 L5 9.5 L10.5 3" fill="none" stroke="#111" stroke-width="2"/></svg>
<div class="t" style="left:515.4px;top:356.03px;font-size:12.000px;line-height:12.000px;color:#111;transform: scaleX(0.9734);transform-origin:left center;">Eichbehörde</div>
<svg class="r" style="left:497px;top:370px;" width="13" height="13" viewBox="0 0 13 13"><rect x="0.5" y="0.5" width="12" height="12" fill="#fbfbfb" stroke="#555" stroke-width="1"/><path d="M2.5 6.5 L5 9.5 L10.5 3" fill="none" stroke="#111" stroke-width="2"/></svg>
<div class="t" style="left:515.4px;top:372.03px;font-size:12.000px;line-height:12.000px;color:#111;transform: scaleX(0.9577);transform-origin:left center;">Externe Prüfstelle (Standort)</div>
<svg class="r" style="left:497px;top:386px;" width="13" height="13" viewBox="0 0 13 13"><rect x="0.5" y="0.5" width="12" height="12" fill="#fbfbfb" stroke="#555" stroke-width="1"/><path d="M2.5 6.5 L5 9.5 L10.5 3" fill="none" stroke="#111" stroke-width="2"/></svg>
<div class="t" style="left:515.4px;top:388.03px;font-size:12.000px;line-height:12.000px;color:#111;transform: scaleX(0.9777);transform-origin:left center;">Interne Prüfstelle</div>
<svg class="r" style="left:497px;top:402px;" width="13" height="13" viewBox="0 0 13 13"><rect x="0.5" y="0.5" width="12" height="12" fill="#fbfbfb" stroke="#555" stroke-width="1"/><path d="M2.5 6.5 L5 9.5 L10.5 3" fill="none" stroke="#111" stroke-width="2"/></svg>
<div class="t" style="left:515.4px;top:404.03px;font-size:12.000px;line-height:12.000px;color:#111;transform: scaleX(0.9529);transform-origin:left center;">Externe Prüfstelle (Labor)</div>
<div class="r" style="left:27px;top:465px;width:937px;height:1px;background:#d0d0d0;"></div>
<div class="t" style="left:34.3px;top:477.32px;font-size:11.650px;line-height:11.650px;color:#111;transform: scaleX(0.9967);transform-origin:left center;">Um nach einer Spalte zu gruppieren, ziehen Sie die Spaltenkopfzeile hierher.</div>
<div class="r" style="left:27px;top:500px;width:920px;height:24px;background:#dcdcdc;"></div>
<div class="r" style="left:27px;top:500px;width:920px;height:1px;background:#c6c6c6;"></div>
<div class="r" style="left:27px;top:524px;width:920px;height:1px;background:#c6c6c6;"></div>
<div class="r" style="left:27px;top:525px;width:920px;height:21px;background:#fafafa;"></div>
<div class="r" style="left:27px;top:546px;width:920px;height:4px;background:#d6d6d6;"></div>
<div class="r" style="left:27px;top:546px;width:920px;height:1px;background:#c8c8c8;"></div>
<div class="r" style="left:27px;top:549px;width:920px;height:1px;background:#c8c8c8;"></div>
<div class="r" style="left:27px;top:550px;width:920px;height:245px;background:#f9f9f9;"></div>
<div class="t" style="left:27.5px;top:508.03px;font-size:12.000px;line-height:12.000px;color:#111;transform: scaleX(0.9883);transform-origin:left center;">LfdNr</div>
<div class="t" style="left:77px;top:508.03px;font-size:12.000px;line-height:12.000px;color:#111;transform: scaleX(0.9574);transform-origin:left center;">Prüfzyklus</div>
<div class="t" style="left:177px;top:508.03px;font-size:12.000px;line-height:12.000px;color:#111;transform: scaleX(0.9664);transform-origin:left center;">Inventar ...</div>
<div class="t" style="left:242px;top:508.03px;font-size:12.000px;line-height:12.000px;color:#111;transform: scaleX(0.9433);transform-origin:left center;">Bezeichnu...</div>
<div class="t" style="left:318px;top:508.03px;font-size:12.000px;line-height:12.000px;color:#111;transform: scaleX(1.0363);transform-origin:left center;">Art</div>
<div class="t" style="left:416px;top:508.03px;font-size:12.000px;line-height:12.000px;color:#111;transform: scaleX(0.9876);transform-origin:left center;">Eingetroff...</div>
<div class="t" style="left:489px;top:508.03px;font-size:12.000px;line-height:12.000px;color:#111;transform: scaleX(0.9514);transform-origin:left center;">Prüfstelle</div>
<div class="t" style="left:590px;top:508.03px;font-size:12.000px;line-height:12.000px;color:#111;transform: scaleX(0.9168);transform-origin:left center;">Status</div>
<div class="t" style="left:690px;top:508.03px;font-size:12.000px;line-height:12.000px;color:#111;transform: scaleX(1.0523);transform-origin:left center;">Termin</div>
<div class="t" style="left:760px;top:508.03px;font-size:12.000px;line-height:12.000px;color:#111;transform: scaleX(0.9535);transform-origin:left center;">Bearbeiter</div>
<div class="t" style="left:836px;top:508.03px;font-size:12.000px;line-height:12.000px;color:#111;transform: scaleX(0.9890);transform-origin:left center;">Organisation</div>
<div class="t" style="left:936px;top:508.03px;font-size:12.000px;line-height:12.000px;color:#111;letter-spacing:-0.3px;">M</div>
<div class="r" style="left:72px;top:500px;width:1px;height:46px;background:#c8c8c8;"></div>
<div class="r" style="left:72px;top:550px;width:1px;height:245px;background:#cfcfcf;"></div>
<div class="r" style="left:172px;top:500px;width:1px;height:46px;background:#c8c8c8;"></div>
<div class="r" style="left:172px;top:550px;width:1px;height:245px;background:#cfcfcf;"></div>
<div class="r" style="left:237px;top:500px;width:1px;height:46px;background:#c8c8c8;"></div>
<div class="r" style="left:237px;top:550px;width:1px;height:245px;background:#cfcfcf;"></div>
<div class="r" style="left:313px;top:500px;width:1px;height:46px;background:#c8c8c8;"></div>
<div class="r" style="left:313px;top:550px;width:1px;height:245px;background:#cfcfcf;"></div>
<div class="r" style="left:411px;top:500px;width:1px;height:46px;background:#c8c8c8;"></div>
<div class="r" style="left:411px;top:550px;width:1px;height:245px;background:#cfcfcf;"></div>
<div class="r" style="left:484px;top:500px;width:1px;height:46px;background:#c8c8c8;"></div>
<div class="r" style="left:484px;top:550px;width:1px;height:245px;background:#cfcfcf;"></div>
<div class="r" style="left:585px;top:500px;width:1px;height:46px;background:#c8c8c8;"></div>
<div class="r" style="left:585px;top:550px;width:1px;height:245px;background:#cfcfcf;"></div>
<div class="r" style="left:685px;top:500px;width:1px;height:46px;background:#c8c8c8;"></div>
<div class="r" style="left:685px;top:550px;width:1px;height:245px;background:#cfcfcf;"></div>
<div class="r" style="left:755px;top:500px;width:1px;height:46px;background:#c8c8c8;"></div>
<div class="r" style="left:755px;top:550px;width:1px;height:245px;background:#cfcfcf;"></div>
<div class="r" style="left:831px;top:500px;width:1px;height:46px;background:#c8c8c8;"></div>
<div class="r" style="left:831px;top:550px;width:1px;height:245px;background:#cfcfcf;"></div>
<div class="r" style="left:931px;top:500px;width:1px;height:46px;background:#c8c8c8;"></div>
<div class="r" style="left:931px;top:550px;width:1px;height:245px;background:#cfcfcf;"></div>
<svg class="r" style="left:156px;top:511px;" width="9" height="6" viewBox="0 0 9 6"><path d="M0 0 H9 L4.5 5Z" fill="#a8a8a8"/></svg>
<div class="r" style="left:0;top:550px;width:947px;height:245px;overflow:hidden;">
<div class="r" style="left:27px;top:21px;width:920px;height:1px;background:#cfcfcf;"></div>
<div class="t" style="left:28px;top:5.03px;font-size:12.000px;line-height:12.000px;color:#e60000;letter-spacing:-0.1px;">2</div>
<div class="t" style="left:77px;top:5.03px;font-size:12.000px;line-height:12.000px;color:#e60000;letter-spacing:0px;transform:scaleX(0.9855);transform-origin:left center;">Kalibrierung (in...</div>
<div class="t" style="left:242.5px;top:5.03px;font-size:12.000px;line-height:12.000px;color:#e60000;letter-spacing:0px;transform:scaleX(0.8689);transform-origin:left center;">BMS02</div>
<div class="t" style="left:318px;top:5.03px;font-size:12.000px;line-height:12.000px;color:#e60000;letter-spacing:0px;transform:scaleX(0.9565);transform-origin:left center;">Bügelmessschr...</div>
<div class="r" style="left:442px;top:5px;width:11px;height:11px;box-sizing:border-box;border:1px solid #4a4a4a;background:#fbfbfb;"></div>
<div class="t" style="left:489px;top:5.03px;font-size:12.000px;line-height:12.000px;color:#e60000;letter-spacing:0px;transform:scaleX(0.9744);transform-origin:left center;">Interne Prüfstelle</div>
<div class="t" style="left:590px;top:5.03px;font-size:12.000px;line-height:12.000px;color:#e60000;letter-spacing:0px;transform:scaleX(0.9790);transform-origin:left center;">1. Prüfaufforde...</div>
<div class="t" style="left:690px;top:5.03px;font-size:12.000px;line-height:12.000px;color:#e60000;letter-spacing:0px;transform:scaleX(0.8957);transform-origin:left center;">16.02.2020</div>
<div class="t" style="left:760px;top:5.03px;font-size:12.000px;line-height:12.000px;color:#e60000;letter-spacing:0px;transform:scaleX(0.9821);transform-origin:left center;">Musterfra...</div>
<div class="t" style="left:836px;top:5.03px;font-size:12.000px;line-height:12.000px;color:#e60000;letter-spacing:0px;transform:scaleX(0.9415);transform-origin:left center;">Spritzgießerei</div>
<div class="r" style="left:27px;top:42px;width:920px;height:1px;background:#cfcfcf;"></div>
<div class="t" style="left:28px;top:26.03px;font-size:12.000px;line-height:12.000px;color:#e60000;letter-spacing:-0.1px;">1</div>
<div class="t" style="left:77px;top:26.03px;font-size:12.000px;line-height:12.000px;color:#e60000;letter-spacing:0px;transform:scaleX(0.9855);transform-origin:left center;">Kalibrierung (in...</div>
<div class="t" style="left:242.5px;top:26.03px;font-size:12.000px;line-height:12.000px;color:#e60000;letter-spacing:0px;transform:scaleX(0.8297);transform-origin:left center;">FL01</div>
<div class="t" style="left:318px;top:26.03px;font-size:12.000px;line-height:12.000px;color:#e60000;letter-spacing:0px;transform:scaleX(0.9586);transform-origin:left center;">Flachlineal</div>
<div class="r" style="left:442px;top:26px;width:11px;height:11px;box-sizing:border-box;border:1px solid #4a4a4a;background:#fbfbfb;"></div>
<div class="t" style="left:489px;top:26.03px;font-size:12.000px;line-height:12.000px;color:#e60000;letter-spacing:0px;transform:scaleX(0.9744);transform-origin:left center;">Interne Prüfstelle</div>
<div class="t" style="left:590px;top:26.03px;font-size:12.000px;line-height:12.000px;color:#e60000;letter-spacing:0px;transform:scaleX(0.9813);transform-origin:left center;">2. Prüfaufforde...</div>
<div class="t" style="left:690px;top:26.03px;font-size:12.000px;line-height:12.000px;color:#e60000;letter-spacing:0px;transform:scaleX(0.8957);transform-origin:left center;">16.02.2020</div>
<div class="t" style="left:760px;top:26.03px;font-size:12.000px;line-height:12.000px;color:#e60000;letter-spacing:0px;transform:scaleX(0.9821);transform-origin:left center;">Musterfra...</div>
<div class="t" style="left:836px;top:26.03px;font-size:12.000px;line-height:12.000px;color:#e60000;letter-spacing:0px;transform:scaleX(0.9053);transform-origin:left center;">Stanzerei</div>
<div class="r" style="left:27px;top:63px;width:920px;height:1px;background:#cfcfcf;"></div>
<div class="t" style="left:28px;top:47.03px;font-size:12.000px;line-height:12.000px;color:#e60000;letter-spacing:-0.1px;">1</div>
<div class="t" style="left:77px;top:47.03px;font-size:12.000px;line-height:12.000px;color:#e60000;letter-spacing:0px;transform:scaleX(0.9855);transform-origin:left center;">Kalibrierung (in...</div>
<div class="t" style="left:242.5px;top:47.03px;font-size:12.000px;line-height:12.000px;color:#e60000;letter-spacing:0px;transform:scaleX(0.8460);transform-origin:left center;">FZ01</div>
<div class="t" style="left:318px;top:47.03px;font-size:12.000px;line-height:12.000px;color:#e60000;letter-spacing:0px;transform:scaleX(0.9334);transform-origin:left center;">Feinzeiger</div>
<div class="r" style="left:442px;top:47px;width:11px;height:11px;box-sizing:border-box;border:1px solid #4a4a4a;background:#fbfbfb;"></div>
<div class="t" style="left:489px;top:47.03px;font-size:12.000px;line-height:12.000px;color:#e60000;letter-spacing:0px;transform:scaleX(0.9744);transform-origin:left center;">Interne Prüfstelle</div>
<div class="t" style="left:590px;top:47.03px;font-size:12.000px;line-height:12.000px;color:#e60000;letter-spacing:0px;transform:scaleX(0.9790);transform-origin:left center;">1. Prüfaufforde...</div>
<div class="t" style="left:690px;top:47.03px;font-size:12.000px;line-height:12.000px;color:#e60000;letter-spacing:0px;transform:scaleX(0.8957);transform-origin:left center;">16.02.2020</div>
<div class="t" style="left:760px;top:47.03px;font-size:12.000px;line-height:12.000px;color:#e60000;letter-spacing:0px;transform:scaleX(0.9821);transform-origin:left center;">Musterfra...</div>
<div class="t" style="left:836px;top:47.03px;font-size:12.000px;line-height:12.000px;color:#e60000;letter-spacing:0px;transform:scaleX(0.9660);transform-origin:left center;">Qualitätssicher...</div>
<div class="r" style="left:27px;top:84px;width:920px;height:1px;background:#cfcfcf;"></div>
<div class="t" style="left:28px;top:68.03px;font-size:12.000px;line-height:12.000px;color:#e60000;letter-spacing:-0.1px;">1</div>
<div class="t" style="left:77px;top:68.03px;font-size:12.000px;line-height:12.000px;color:#e60000;letter-spacing:0px;transform:scaleX(0.9855);transform-origin:left center;">Kalibrierung (in...</div>
<div class="t" style="left:242.5px;top:68.03px;font-size:12.000px;line-height:12.000px;color:#e60000;letter-spacing:0px;transform:scaleX(0.8538);transform-origin:left center;">GALR01</div>
<div class="t" style="left:318px;top:68.03px;font-size:12.000px;line-height:12.000px;color:#e60000;letter-spacing:0px;transform:scaleX(0.9625);transform-origin:left center;">Gut/Ausschuss...</div>
<div class="r" style="left:442px;top:68px;width:11px;height:11px;box-sizing:border-box;border:1px solid #4a4a4a;background:#fbfbfb;"></div>
<div class="t" style="left:489px;top:68.03px;font-size:12.000px;line-height:12.000px;color:#e60000;letter-spacing:0px;transform:scaleX(0.9744);transform-origin:left center;">Interne Prüfstelle</div>
<div class="t" style="left:590px;top:68.03px;font-size:12.000px;line-height:12.000px;color:#e60000;letter-spacing:0px;transform:scaleX(0.9790);transform-origin:left center;">1. Prüfaufforde...</div>
<div class="t" style="left:690px;top:68.03px;font-size:12.000px;line-height:12.000px;color:#e60000;letter-spacing:0px;transform:scaleX(0.8957);transform-origin:left center;">16.02.2020</div>
<div class="t" style="left:760px;top:68.03px;font-size:12.000px;line-height:12.000px;color:#e60000;letter-spacing:0px;transform:scaleX(0.9821);transform-origin:left center;">Musterfra...</div>
<div class="t" style="left:836px;top:68.03px;font-size:12.000px;line-height:12.000px;color:#e60000;letter-spacing:0px;transform:scaleX(0.9660);transform-origin:left center;">Qualitätssicher...</div>
<div class="r" style="left:27px;top:105px;width:920px;height:1px;background:#cfcfcf;"></div>
<div class="t" style="left:28px;top:89.03px;font-size:12.000px;line-height:12.000px;color:#e60000;letter-spacing:-0.1px;">1</div>
<div class="t" style="left:77px;top:89.03px;font-size:12.000px;line-height:12.000px;color:#e60000;letter-spacing:0px;transform:scaleX(0.9855);transform-origin:left center;">Kalibrierung (in...</div>
<div class="t" style="left:242.5px;top:89.03px;font-size:12.000px;line-height:12.000px;color:#e60000;letter-spacing:0px;transform:scaleX(0.8756);transform-origin:left center;">GLD02</div>
<div class="t" style="left:318px;top:89.03px;font-size:12.000px;line-height:12.000px;color:#e60000;letter-spacing:0px;transform:scaleX(0.9637);transform-origin:left center;">Gewindelehrd...</div>
<div class="r" style="left:442px;top:89px;width:11px;height:11px;box-sizing:border-box;border:1px solid #4a4a4a;background:#fbfbfb;"></div>
<div class="t" style="left:489px;top:89.03px;font-size:12.000px;line-height:12.000px;color:#e60000;letter-spacing:0px;transform:scaleX(0.9744);transform-origin:left center;">Interne Prüfstelle</div>
<div class="t" style="left:590px;top:89.03px;font-size:12.000px;line-height:12.000px;color:#e60000;letter-spacing:0px;transform:scaleX(0.9813);transform-origin:left center;">2. Prüfaufforde...</div>
<div class="t" style="left:690px;top:89.03px;font-size:12.000px;line-height:12.000px;color:#e60000;letter-spacing:0px;transform:scaleX(0.8957);transform-origin:left center;">16.02.2020</div>
<div class="t" style="left:760px;top:89.03px;font-size:12.000px;line-height:12.000px;color:#e60000;letter-spacing:0px;transform:scaleX(0.9821);transform-origin:left center;">Musterfra...</div>
<div class="t" style="left:836px;top:89.03px;font-size:12.000px;line-height:12.000px;color:#e60000;letter-spacing:0px;transform:scaleX(1.0106);transform-origin:left center;">Montage</div>
<div class="r" style="left:27px;top:126px;width:920px;height:1px;background:#cfcfcf;"></div>
<div class="t" style="left:28px;top:110.03px;font-size:12.000px;line-height:12.000px;color:#e60000;letter-spacing:-0.1px;">1</div>
<div class="t" style="left:77px;top:110.03px;font-size:12.000px;line-height:12.000px;color:#e60000;letter-spacing:0px;transform:scaleX(0.9855);transform-origin:left center;">Kalibrierung (in...</div>
<div class="t" style="left:242.5px;top:110.03px;font-size:12.000px;line-height:12.000px;color:#e60000;letter-spacing:0px;transform:scaleX(0.8335);transform-origin:left center;">GLR01</div>
<div class="t" style="left:318px;top:110.03px;font-size:12.000px;line-height:12.000px;color:#e60000;letter-spacing:0px;transform:scaleX(0.9841);transform-origin:left center;">Gewindelehrring</div>
<div class="r" style="left:442px;top:110px;width:11px;height:11px;box-sizing:border-box;border:1px solid #4a4a4a;background:#fbfbfb;"></div>
<div class="t" style="left:489px;top:110.03px;font-size:12.000px;line-height:12.000px;color:#e60000;letter-spacing:0px;transform:scaleX(0.9744);transform-origin:left center;">Interne Prüfstelle</div>
<div class="t" style="left:590px;top:110.03px;font-size:12.000px;line-height:12.000px;color:#e60000;letter-spacing:0px;transform:scaleX(0.9813);transform-origin:left center;">2. Prüfaufforde...</div>
<div class="t" style="left:690px;top:110.03px;font-size:12.000px;line-height:12.000px;color:#e60000;letter-spacing:0px;transform:scaleX(0.8957);transform-origin:left center;">16.02.2020</div>
<div class="t" style="left:760px;top:110.03px;font-size:12.000px;line-height:12.000px;color:#e60000;letter-spacing:0px;transform:scaleX(0.9821);transform-origin:left center;">Musterfra...</div>
<div class="t" style="left:836px;top:110.03px;font-size:12.000px;line-height:12.000px;color:#e60000;letter-spacing:0px;transform:scaleX(0.9660);transform-origin:left center;">Qualitätssicher...</div>
<div class="r" style="left:27px;top:147px;width:920px;height:1px;background:#cfcfcf;"></div>
<div class="t" style="left:28px;top:131.03px;font-size:12.000px;line-height:12.000px;color:#e60000;letter-spacing:-0.1px;">1</div>
<div class="t" style="left:77px;top:131.03px;font-size:12.000px;line-height:12.000px;color:#e60000;letter-spacing:0px;transform:scaleX(0.9855);transform-origin:left center;">Kalibrierung (in...</div>
<div class="t" style="left:242.5px;top:131.03px;font-size:12.000px;line-height:12.000px;color:#e60000;letter-spacing:0px;transform:scaleX(0.8819);transform-origin:left center;">HL01</div>
<div class="t" style="left:318px;top:131.03px;font-size:12.000px;line-height:12.000px;color:#e60000;letter-spacing:0px;transform:scaleX(0.9680);transform-origin:left center;">Haarlineal</div>
<div class="r" style="left:442px;top:131px;width:11px;height:11px;box-sizing:border-box;border:1px solid #4a4a4a;background:#fbfbfb;"></div>
<div class="t" style="left:489px;top:131.03px;font-size:12.000px;line-height:12.000px;color:#e60000;letter-spacing:0px;transform:scaleX(0.9744);transform-origin:left center;">Interne Prüfstelle</div>
<div class="t" style="left:590px;top:131.03px;font-size:12.000px;line-height:12.000px;color:#e60000;letter-spacing:0px;transform:scaleX(0.9790);transform-origin:left center;">1. Prüfaufforde...</div>
<div class="t" style="left:690px;top:131.03px;font-size:12.000px;line-height:12.000px;color:#e60000;letter-spacing:0px;transform:scaleX(0.8957);transform-origin:left center;">16.02.2020</div>
<div class="t" style="left:760px;top:131.03px;font-size:12.000px;line-height:12.000px;color:#e60000;letter-spacing:0px;transform:scaleX(0.9821);transform-origin:left center;">Musterfra...</div>
<div class="t" style="left:836px;top:131.03px;font-size:12.000px;line-height:12.000px;color:#e60000;letter-spacing:0px;transform:scaleX(0.9660);transform-origin:left center;">Qualitätssicher...</div>
<div class="r" style="left:27px;top:168px;width:920px;height:1px;background:#cfcfcf;"></div>
<div class="t" style="left:28px;top:152.03px;font-size:12.000px;line-height:12.000px;color:#e60000;letter-spacing:-0.1px;">1</div>
<div class="t" style="left:77px;top:152.03px;font-size:12.000px;line-height:12.000px;color:#e60000;letter-spacing:0px;transform:scaleX(0.9855);transform-origin:left center;">Kalibrierung (in...</div>
<div class="t" style="left:242.5px;top:152.03px;font-size:12.000px;line-height:12.000px;color:#e60000;letter-spacing:0px;transform:scaleX(0.9171);transform-origin:left center;">HMS01</div>
<div class="t" style="left:318px;top:152.03px;font-size:12.000px;line-height:12.000px;color:#e60000;letter-spacing:0px;transform:scaleX(0.9565);transform-origin:left center;">Höhenmesssc...</div>
<div class="r" style="left:442px;top:152px;width:11px;height:11px;box-sizing:border-box;border:1px solid #4a4a4a;background:#fbfbfb;"></div>
<div class="t" style="left:489px;top:152.03px;font-size:12.000px;line-height:12.000px;color:#e60000;letter-spacing:0px;transform:scaleX(0.9744);transform-origin:left center;">Interne Prüfstelle</div>
<div class="t" style="left:590px;top:152.03px;font-size:12.000px;line-height:12.000px;color:#e60000;letter-spacing:0px;transform:scaleX(0.9970);transform-origin:left center;">1. Mahnung</div>
<div class="t" style="left:690px;top:152.03px;font-size:12.000px;line-height:12.000px;color:#e60000;letter-spacing:0px;transform:scaleX(0.8957);transform-origin:left center;">16.02.2020</div>
<div class="t" style="left:760px;top:152.03px;font-size:12.000px;line-height:12.000px;color:#e60000;letter-spacing:0px;transform:scaleX(0.9821);transform-origin:left center;">Musterfra...</div>
<div class="t" style="left:836px;top:152.03px;font-size:12.000px;line-height:12.000px;color:#e60000;letter-spacing:0px;transform:scaleX(0.9415);transform-origin:left center;">Spritzgießerei</div>
<div class="r" style="left:27px;top:189px;width:920px;height:1px;background:#cfcfcf;"></div>
<div class="t" style="left:28px;top:173.03px;font-size:12.000px;line-height:12.000px;color:#e60000;letter-spacing:-0.1px;">1</div>
<div class="t" style="left:77px;top:173.03px;font-size:12.000px;line-height:12.000px;color:#e60000;letter-spacing:0px;transform:scaleX(0.9855);transform-origin:left center;">Kalibrierung (in...</div>
<div class="t" style="left:242.5px;top:173.03px;font-size:12.000px;line-height:12.000px;color:#e60000;letter-spacing:0px;transform:scaleX(0.9098);transform-origin:left center;">HMSB01</div>
<div class="t" style="left:318px;top:173.03px;font-size:12.000px;line-height:12.000px;color:#e60000;letter-spacing:0px;transform:scaleX(0.9565);transform-origin:left center;">Höhenmesssc...</div>
<div class="r" style="left:442px;top:173px;width:11px;height:11px;box-sizing:border-box;border:1px solid #4a4a4a;background:#fbfbfb;"></div>
<div class="t" style="left:489px;top:173.03px;font-size:12.000px;line-height:12.000px;color:#e60000;letter-spacing:0px;transform:scaleX(0.9744);transform-origin:left center;">Interne Prüfstelle</div>
<div class="t" style="left:590px;top:173.03px;font-size:12.000px;line-height:12.000px;color:#e60000;letter-spacing:0px;transform:scaleX(0.9790);transform-origin:left center;">1. Prüfaufforde...</div>
<div class="t" style="left:690px;top:173.03px;font-size:12.000px;line-height:12.000px;color:#e60000;letter-spacing:0px;transform:scaleX(0.8957);transform-origin:left center;">16.02.2020</div>
<div class="t" style="left:760px;top:173.03px;font-size:12.000px;line-height:12.000px;color:#e60000;letter-spacing:0px;transform:scaleX(0.9821);transform-origin:left center;">Musterfra...</div>
<div class="t" style="left:836px;top:173.03px;font-size:12.000px;line-height:12.000px;color:#e60000;letter-spacing:0px;transform:scaleX(0.9591);transform-origin:left center;">Lackiererei</div>
<div class="r" style="left:27px;top:210px;width:920px;height:1px;background:#cfcfcf;"></div>
<div class="t" style="left:28px;top:194.03px;font-size:12.000px;line-height:12.000px;color:#e60000;letter-spacing:-0.1px;">1</div>
<div class="t" style="left:77px;top:194.03px;font-size:12.000px;line-height:12.000px;color:#e60000;letter-spacing:0px;transform:scaleX(0.9855);transform-origin:left center;">Kalibrierung (in...</div>
<div class="t" style="left:242.5px;top:194.03px;font-size:12.000px;line-height:12.000px;color:#e60000;letter-spacing:0px;transform:scaleX(0.8471);transform-origin:left center;">LD01</div>
<div class="t" style="left:318px;top:194.03px;font-size:12.000px;line-height:12.000px;color:#e60000;letter-spacing:0px;transform:scaleX(0.9845);transform-origin:left center;">Lehrdorn</div>
<div class="r" style="left:442px;top:194px;width:11px;height:11px;box-sizing:border-box;border:1px solid #4a4a4a;background:#fbfbfb;"></div>
<div class="t" style="left:489px;top:194.03px;font-size:12.000px;line-height:12.000px;color:#e60000;letter-spacing:0px;transform:scaleX(0.9744);transform-origin:left center;">Interne Prüfstelle</div>
<div class="t" style="left:590px;top:194.03px;font-size:12.000px;line-height:12.000px;color:#e60000;letter-spacing:0px;transform:scaleX(0.9790);transform-origin:left center;">1. Prüfaufforde...</div>
<div class="t" style="left:690px;top:194.03px;font-size:12.000px;line-height:12.000px;color:#e60000;letter-spacing:0px;transform:scaleX(0.8957);transform-origin:left center;">16.02.2020</div>
<div class="t" style="left:760px;top:194.03px;font-size:12.000px;line-height:12.000px;color:#e60000;letter-spacing:0px;transform:scaleX(0.9821);transform-origin:left center;">Musterfra...</div>
<div class="t" style="left:836px;top:194.03px;font-size:12.000px;line-height:12.000px;color:#e60000;letter-spacing:0px;transform:scaleX(0.9591);transform-origin:left center;">Lackiererei</div>
<div class="r" style="left:27px;top:231px;width:920px;height:1px;background:#cfcfcf;"></div>
<div class="t" style="left:28px;top:215.03px;font-size:12.000px;line-height:12.000px;color:#e60000;letter-spacing:-0.1px;">1</div>
<div class="t" style="left:77px;top:215.03px;font-size:12.000px;line-height:12.000px;color:#e60000;letter-spacing:0px;transform:scaleX(0.9855);transform-origin:left center;">Kalibrierung (in...</div>
<div class="t" style="left:242.5px;top:215.03px;font-size:12.000px;line-height:12.000px;color:#e60000;letter-spacing:0px;transform:scaleX(0.8819);transform-origin:left center;">LD02</div>
<div class="t" style="left:318px;top:215.03px;font-size:12.000px;line-height:12.000px;color:#e60000;letter-spacing:0px;transform:scaleX(0.9845);transform-origin:left center;">Lehrdorn</div>
<div class="r" style="left:442px;top:215px;width:11px;height:11px;box-sizing:border-box;border:1px solid #4a4a4a;background:#fbfbfb;"></div>
<div class="t" style="left:489px;top:215.03px;font-size:12.000px;line-height:12.000px;color:#e60000;letter-spacing:0px;transform:scaleX(0.9744);transform-origin:left center;">Interne Prüfstelle</div>
<div class="t" style="left:590px;top:215.03px;font-size:12.000px;line-height:12.000px;color:#e60000;letter-spacing:0px;transform:scaleX(0.9813);transform-origin:left center;">2. Prüfaufforde...</div>
<div class="t" style="left:690px;top:215.03px;font-size:12.000px;line-height:12.000px;color:#e60000;letter-spacing:0px;transform:scaleX(0.8957);transform-origin:left center;">16.02.2020</div>
<div class="t" style="left:760px;top:215.03px;font-size:12.000px;line-height:12.000px;color:#e60000;letter-spacing:0px;transform:scaleX(0.9821);transform-origin:left center;">Musterfra...</div>
<div class="t" style="left:836px;top:215.03px;font-size:12.000px;line-height:12.000px;color:#e60000;letter-spacing:0px;transform:scaleX(0.9660);transform-origin:left center;">Qualitätssicher...</div>
<div class="r" style="left:27px;top:252px;width:920px;height:1px;background:#cfcfcf;"></div>
<div class="t" style="left:28px;top:236.03px;font-size:12.000px;line-height:12.000px;color:#e60000;letter-spacing:-0.1px;">1</div>
<div class="t" style="left:77px;top:236.03px;font-size:12.000px;line-height:12.000px;color:#e60000;letter-spacing:0px;transform:scaleX(0.9855);transform-origin:left center;">Kalibrierung (in...</div>
<div class="t" style="left:242.5px;top:236.03px;font-size:12.000px;line-height:12.000px;color:#e60000;letter-spacing:0px;transform:scaleX(0.8819);transform-origin:left center;">LD03</div>
<div class="t" style="left:318px;top:236.03px;font-size:12.000px;line-height:12.000px;color:#e60000;letter-spacing:0px;transform:scaleX(0.9845);transform-origin:left center;">Lehrdorn</div>
<div class="r" style="left:442px;top:236px;width:11px;height:11px;box-sizing:border-box;border:1px solid #4a4a4a;background:#fbfbfb;"></div>
<div class="t" style="left:489px;top:236.03px;font-size:12.000px;line-height:12.000px;color:#e60000;letter-spacing:0px;transform:scaleX(0.9744);transform-origin:left center;">Interne Prüfstelle</div>
<div class="t" style="left:590px;top:236.03px;font-size:12.000px;line-height:12.000px;color:#e60000;letter-spacing:0px;transform:scaleX(0.9790);transform-origin:left center;">1. Prüfaufforde...</div>
<div class="t" style="left:690px;top:236.03px;font-size:12.000px;line-height:12.000px;color:#e60000;letter-spacing:0px;transform:scaleX(0.8957);transform-origin:left center;">16.02.2020</div>
<div class="t" style="left:760px;top:236.03px;font-size:12.000px;line-height:12.000px;color:#e60000;letter-spacing:0px;transform:scaleX(0.9821);transform-origin:left center;">Musterfra...</div>
<div class="t" style="left:836px;top:236.03px;font-size:12.000px;line-height:12.000px;color:#e60000;letter-spacing:0px;transform:scaleX(0.9660);transform-origin:left center;">Qualitätssicher...</div>
</div>
<div class="r" style="left:947px;top:466px;width:17px;height:345px;background:#f9f9f9;"></div>
<svg class="r" style="left:950px;top:469px;" width="11" height="7" viewBox="0 0 11 7"><path d="M0.5 6 L5.5 1 L10.5 6Z" fill="#d6d6d6"/></svg>
<div class="r" style="left:951px;top:481px;width:9px;height:193px;background:#d6d6d6;"></div>
<svg class="r" style="left:950px;top:785px;" width="11" height="6" viewBox="0 0 11 6"><path d="M0.5 0.5 L5.5 5.5 L10.5 0.5Z" fill="#d6d6d6"/></svg>
<div class="r" style="left:947px;top:795px;width:17px;height:16px;background:#c8c8c8;"></div>
<div class="r" style="left:27px;top:795px;width:230px;height:17px;background:#c8c8c8;"></div>
<div class="t" style="left:27.5px;top:797.86px;font-size:11.000px;line-height:11.000px;color:#111;transform: scaleX(0.8556);transform-origin:left center;">Datensatz:</div>
<div class="r" style="left:129px;top:795px;width:34px;height:16px;background:#ffffff;"></div>
<div class="t" style="left:162px;top:797.95px;font-size:11.500px;line-height:11.500px;color:#111;transform:translateX(-100%);transform-origin:right center;">1</div>
<div class="t" style="left:167px;top:797.95px;font-size:11.500px;line-height:11.500px;color:#111;transform: scaleX(0.8568);transform-origin:left center;">Von</div>
<div class="t" style="left:194.7px;top:797.95px;font-size:11.500px;line-height:11.500px;color:#111;transform: scaleX(0.7030);transform-origin:left center;">17</div>
<svg class="r" style="left:86px;top:797px;" width="10" height="11" viewBox="0 0 10 11"><rect x="0.5" y="1.5" width="1.6" height="8" fill="#111"/><path d="M9 1.5 V9.5 L3 5.5Z" fill="#111"/></svg>
<svg class="r" style="left:112px;top:798px;" width="7" height="10" viewBox="0 0 7 10"><path d="M6 1 V9 L1 5Z" fill="#9a9a9a"/></svg>
<svg class="r" style="left:218px;top:798px;" width="7" height="10" viewBox="0 0 7 10"><path d="M1 1 V9 L6 5Z" fill="#111"/></svg>
<svg class="r" style="left:240px;top:797px;" width="10" height="11" viewBox="0 0 10 11"><path d="M1 1.5 V9.5 L7 5.5Z" fill="#111"/><rect x="7.9" y="1.5" width="1.6" height="8" fill="#111"/></svg>
<div class="r" style="left:257px;top:795px;width:690px;height:16px;background:#f9f9f9;"></div>
<svg class="r" style="left:260px;top:799px;" width="7" height="9" viewBox="0 0 7 9"><path d="M6 0.5 V8.5 L1 4.5Z" fill="#dedede"/></svg>
<div class="r" style="left:273px;top:799px;width:464px;height:9px;background:#d6d6d6;"></div>
<svg class="r" style="left:937px;top:799px;" width="7" height="9" viewBox="0 0 7 9"><path d="M1 0.5 V8.5 L6 4.5Z" fill="#dedede"/></svg>
<div class="r" style="left:969px;top:223px;width:445px;height:1px;background:#c6c6c6;"></div>
<div class="r" style="left:969px;top:224px;width:445px;height:285px;background:#f9f9f9;box-sizing:border-box;border-right:1px solid #c8c8c8;border-bottom:1px solid #c8c8c8;"></div>
<div class="r" style="left:993px;top:235px;width:279px;height:230px;background:#fafafa;box-sizing:border-box;border:1px solid #a5a5a5;border-bottom:none;"></div>
<div class="r" style="left:994px;top:418px;width:277px;height:1px;background:#dadada;"></div>
<div class="r" style="left:988px;top:418px;width:5px;height:1px;background:#a5a5a5;"></div>
<div class="t" style="left:982px;top:413.16px;font-size:11.000px;line-height:11.000px;color:#222;transform:translateX(-100%);transform-origin:right center;">2</div>
<div class="r" style="left:994px;top:372px;width:277px;height:1px;background:#dadada;"></div>
<div class="r" style="left:988px;top:372px;width:5px;height:1px;background:#a5a5a5;"></div>
<div class="t" style="left:982px;top:367.16px;font-size:11.000px;line-height:11.000px;color:#222;transform:translateX(-100%);transform-origin:right center;">4</div>
<div class="r" style="left:994px;top:325px;width:277px;height:1px;background:#dadada;"></div>
<div class="r" style="left:988px;top:325px;width:5px;height:1px;background:#a5a5a5;"></div>
<div class="t" style="left:982px;top:320.16px;font-size:11.000px;line-height:11.000px;color:#222;transform:translateX(-100%);transform-origin:right center;">6</div>
<div class="r" style="left:994px;top:279px;width:277px;height:1px;background:#dadada;"></div>
<div class="r" style="left:988px;top:279px;width:5px;height:1px;background:#a5a5a5;"></div>
<div class="t" style="left:982px;top:274.16px;font-size:11.000px;line-height:11.000px;color:#222;transform:translateX(-100%);transform-origin:right center;">8</div>
<div class="t" style="left:982px;top:459.16px;font-size:11.000px;line-height:11.000px;color:#222;transform:translateX(-100%);transform-origin:right center;">0</div>
<div class="r" style="left:988px;top:464px;width:284px;height:1px;background:#a5a5a5;"></div>
<div class="r" style="left:990px;top:449px;width:3px;height:1px;background:#a5a5a5;"></div>
<div class="r" style="left:990px;top:433px;width:3px;height:1px;background:#a5a5a5;"></div>
<div class="r" style="left:990px;top:402px;width:3px;height:1px;background:#a5a5a5;"></div>
<div class="r" style="left:990px;top:387px;width:3px;height:1px;background:#a5a5a5;"></div>
<div class="r" style="left:990px;top:356px;width:3px;height:1px;background:#a5a5a5;"></div>
<div class="r" style="left:990px;top:341px;width:3px;height:1px;background:#a5a5a5;"></div>
<div class="r" style="left:990px;top:310px;width:3px;height:1px;background:#a5a5a5;"></div>
<div class="r" style="left:990px;top:295px;width:3px;height:1px;background:#a5a5a5;"></div>
<div class="r" style="left:990px;top:264px;width:3px;height:1px;background:#a5a5a5;"></div>
<div class="r" style="left:990px;top:248px;width:3px;height:1px;background:#a5a5a5;"></div>
<div class="r" style="left:1007px;top:441px;width:43px;height:23px;background:#4f81bd;box-sizing:border-box;border:1px solid #3f6fa8;border-bottom:none;"></div>
<div class="r" style="left:1007px;top:256px;width:43px;height:185px;background:#c0504d;box-sizing:border-box;border:1px solid #a8403e;border-bottom:none;"></div>
<div class="r" style="left:1076px;top:302px;width:43px;height:162px;background:#c0504d;box-sizing:border-box;border:1px solid #a8403e;border-bottom:none;"></div>
<div class="r" style="left:1146px;top:441px;width:43px;height:23px;background:#c0504d;box-sizing:border-box;border:1px solid #a8403e;border-bottom:none;"></div>
<div class="r" style="left:1001px;top:465px;width:1px;height:3px;background:#a5a5a5;"></div>
<div class="r" style="left:1015px;top:465px;width:1px;height:3px;background:#a5a5a5;"></div>
<div class="r" style="left:1029px;top:465px;width:1px;height:5px;background:#a5a5a5;"></div>
<div class="r" style="left:1043px;top:465px;width:1px;height:3px;background:#a5a5a5;"></div>
<div class="r" style="left:1057px;top:465px;width:1px;height:3px;background:#a5a5a5;"></div>
<div class="r" style="left:1071px;top:465px;width:1px;height:3px;background:#a5a5a5;"></div>
<div class="r" style="left:1084px;top:465px;width:1px;height:3px;background:#a5a5a5;"></div>
<div class="r" style="left:1098px;top:465px;width:1px;height:5px;background:#a5a5a5;"></div>
<div class="r" style="left:1112px;top:465px;width:1px;height:3px;background:#a5a5a5;"></div>
<div class="r" style="left:1126px;top:465px;width:1px;height:3px;background:#a5a5a5;"></div>
<div class="r" style="left:1140px;top:465px;width:1px;height:3px;background:#a5a5a5;"></div>
<div class="r" style="left:1154px;top:465px;width:1px;height:3px;background:#a5a5a5;"></div>
<div class="r" style="left:1168px;top:465px;width:1px;height:5px;background:#a5a5a5;"></div>
<div class="r" style="left:1182px;top:465px;width:1px;height:3px;background:#a5a5a5;"></div>
<div class="r" style="left:1196px;top:465px;width:1px;height:3px;background:#a5a5a5;"></div>
<div class="r" style="left:1210px;top:465px;width:1px;height:3px;background:#a5a5a5;"></div>
<div class="r" style="left:1223px;top:465px;width:1px;height:3px;background:#a5a5a5;"></div>
<div class="r" style="left:1237px;top:465px;width:1px;height:5px;background:#a5a5a5;"></div>
<div class="r" style="left:1251px;top:465px;width:1px;height:3px;background:#a5a5a5;"></div>
<div class="r" style="left:1265px;top:465px;width:1px;height:3px;background:#a5a5a5;"></div>
<div class="t" style="left:1097.7px;top:474.62px;font-size:11.300px;line-height:11.300px;color:#222;transform:translateX(-50%) scaleX(0.9983);transform-origin:center center;">2. Prüfaufforderung</div>
<div class="t" style="left:1236px;top:474.62px;font-size:11.300px;line-height:11.300px;color:#222;transform:translateX(-50%) scaleX(0.9549);transform-origin:center center;">2. Mahnung</div>
<div class="t" style="left:1028.5px;top:489.62px;font-size:11.300px;line-height:11.300px;color:#222;transform:translateX(-50%) scaleX(0.9983);transform-origin:center center;">1. Prüfaufforderung</div>
<div class="t" style="left:1167px;top:489.62px;font-size:11.300px;line-height:11.300px;color:#222;transform:translateX(-50%) scaleX(0.9549);transform-origin:center center;">1. Mahnung</div>
<div class="r" style="left:1282px;top:235px;width:121px;height:40px;background:#fafafa;box-sizing:border-box;border:1px solid #a9a9a9;"></div>
<div class="r" style="left:1286px;top:239px;width:18px;height:14px;background:#4f81bd;box-sizing:border-box;border:1px solid #3f6fa8;"></div>
<div class="r" style="left:1286px;top:257px;width:18px;height:14px;background:#c0504d;box-sizing:border-box;border:1px solid #a8403e;"></div>
<div class="t" style="left:1309.4px;top:240.70px;font-size:11.200px;line-height:11.200px;color:#111;transform: scaleX(0.9967);transform-origin:left center;">Eingetroffen</div>
<div class="t" style="left:1309.4px;top:258.70px;font-size:11.200px;line-height:11.200px;color:#111;transform: scaleX(1.0024);transform-origin:left center;">Nicht eingetroffen</div>
<div class="r" style="left:973px;top:511px;width:163px;height:21px;background:#c01a39;"></div>
<svg class="r" style="left:976px;top:514px;" width="16" height="16" viewBox="0 0 16 16"><rect x="0.5" y="0.5" width="15" height="15" fill="#f4f4f4" stroke="#9a9a9a" stroke-width="1"/><rect x="2" y="8" width="2.5" height="6" fill="#f5c400"/><rect x="5" y="3" width="2.5" height="11" fill="#3cab2e"/><rect x="8" y="9" width="2.5" height="5" fill="#2c6ad0"/><rect x="11" y="5" width="2.5" height="9" fill="#d61c24"/><rect x="1.5" y="13.5" width="13" height="1" fill="#555"/></svg>
<div class="t" style="left:996.2px;top:517.03px;font-size:12.000px;line-height:12.000px;color:#fff;transform: scaleX(0.9818);transform-origin:left center;">Statistiken (Eingetroffen)</div>
<svg class="r" style="left:1399px;top:518px;" width="10" height="9" viewBox="0 0 10 9"><path d="M1 1 L9 8 M9 1 L1 8" stroke="#1d3f8f" stroke-width="1.6"/></svg>
<div class="r" style="left:969px;top:533px;width:445px;height:5px;background:#c8c8c8;"></div>
<div class="r" style="left:969px;top:538px;width:445px;height:273px;background:#f9f9f9;box-sizing:border-box;border-right:1px solid #c8c8c8;border-bottom:1px solid #c8c8c8;"></div>
<div class="r" style="left:993px;top:548px;width:410px;height:220px;background:#fafafa;box-sizing:border-box;border:1px solid #a5a5a5;border-bottom:none;"></div>
<div class="r" style="left:994px;top:723px;width:408px;height:1px;background:#dadada;"></div>
<div class="r" style="left:988px;top:723px;width:5px;height:1px;background:#a5a5a5;"></div>
<div class="t" style="left:982px;top:718.16px;font-size:11.000px;line-height:11.000px;color:#222;transform:translateX(-100%);transform-origin:right center;">2</div>
<div class="r" style="left:994px;top:679px;width:408px;height:1px;background:#dadada;"></div>
<div class="r" style="left:988px;top:679px;width:5px;height:1px;background:#a5a5a5;"></div>
<div class="t" style="left:982px;top:674.16px;font-size:11.000px;line-height:11.000px;color:#222;transform:translateX(-100%);transform-origin:right center;">4</div>
<div class="r" style="left:994px;top:634px;width:408px;height:1px;background:#dadada;"></div>
<div class="r" style="left:988px;top:634px;width:5px;height:1px;background:#a5a5a5;"></div>
<div class="t" style="left:982px;top:629.16px;font-size:11.000px;line-height:11.000px;color:#222;transform:translateX(-100%);transform-origin:right center;">6</div>
<div class="r" style="left:994px;top:590px;width:408px;height:1px;background:#dadada;"></div>
<div class="r" style="left:988px;top:590px;width:5px;height:1px;background:#a5a5a5;"></div>
<div class="t" style="left:982px;top:585.16px;font-size:11.000px;line-height:11.000px;color:#222;transform:translateX(-100%);transform-origin:right center;">8</div>
<div class="t" style="left:982px;top:762.16px;font-size:11.000px;line-height:11.000px;color:#222;transform:translateX(-100%);transform-origin:right center;">0</div>
<div class="r" style="left:988px;top:767px;width:415px;height:1px;background:#a5a5a5;"></div>
<div class="r" style="left:990px;top:752px;width:3px;height:1px;background:#a5a5a5;"></div>
<div class="r" style="left:990px;top:738px;width:3px;height:1px;background:#a5a5a5;"></div>
<div class="r" style="left:990px;top:708px;width:3px;height:1px;background:#a5a5a5;"></div>
<div class="r" style="left:990px;top:693px;width:3px;height:1px;background:#a5a5a5;"></div>
<div class="r" style="left:990px;top:664px;width:3px;height:1px;background:#a5a5a5;"></div>
<div class="r" style="left:990px;top:649px;width:3px;height:1px;background:#a5a5a5;"></div>
<div class="r" style="left:990px;top:620px;width:3px;height:1px;background:#a5a5a5;"></div>
<div class="r" style="left:990px;top:605px;width:3px;height:1px;background:#a5a5a5;"></div>
<div class="r" style="left:990px;top:575px;width:3px;height:1px;background:#a5a5a5;"></div>
<div class="r" style="left:990px;top:561px;width:3px;height:1px;background:#a5a5a5;"></div>
<div class="r" style="left:1013px;top:568px;width:63px;height:199px;background:#4f81bd;box-sizing:border-box;border:1px solid #3f6fa8;border-bottom:none;"></div>
<div class="r" style="left:1117px;top:612px;width:61px;height:155px;background:#4f81bd;box-sizing:border-box;border:1px solid #3f6fa8;border-bottom:none;"></div>
<div class="r" style="left:1218px;top:745px;width:62px;height:22px;background:#4f81bd;box-sizing:border-box;border:1px solid #3f6fa8;border-bottom:none;"></div>
<div class="r" style="left:1003px;top:768px;width:1px;height:3px;background:#a5a5a5;"></div>
<div class="r" style="left:1024px;top:768px;width:1px;height:3px;background:#a5a5a5;"></div>
<div class="r" style="left:1044px;top:768px;width:1px;height:5px;background:#a5a5a5;"></div>
<div class="r" style="left:1065px;top:768px;width:1px;height:3px;background:#a5a5a5;"></div>
<div class="r" style="left:1085px;top:768px;width:1px;height:3px;background:#a5a5a5;"></div>
<div class="r" style="left:1106px;top:768px;width:1px;height:3px;background:#a5a5a5;"></div>
<div class="r" style="left:1126px;top:768px;width:1px;height:3px;background:#a5a5a5;"></div>
<div class="r" style="left:1147px;top:768px;width:1px;height:5px;background:#a5a5a5;"></div>
<div class="r" style="left:1167px;top:768px;width:1px;height:3px;background:#a5a5a5;"></div>
<div class="r" style="left:1188px;top:768px;width:1px;height:3px;background:#a5a5a5;"></div>
<div class="r" style="left:1208px;top:768px;width:1px;height:3px;background:#a5a5a5;"></div>
<div class="r" style="left:1229px;top:768px;width:1px;height:3px;background:#a5a5a5;"></div>
<div class="r" style="left:1249px;top:768px;width:1px;height:5px;background:#a5a5a5;"></div>
<div class="r" style="left:1270px;top:768px;width:1px;height:3px;background:#a5a5a5;"></div>
<div class="r" style="left:1290px;top:768px;width:1px;height:3px;background:#a5a5a5;"></div>
<div class="r" style="left:1311px;top:768px;width:1px;height:3px;background:#a5a5a5;"></div>
<div class="r" style="left:1331px;top:768px;width:1px;height:3px;background:#a5a5a5;"></div>
<div class="r" style="left:1352px;top:768px;width:1px;height:5px;background:#a5a5a5;"></div>
<div class="r" style="left:1372px;top:768px;width:1px;height:3px;background:#a5a5a5;"></div>
<div class="r" style="left:1393px;top:768px;width:1px;height:3px;background:#a5a5a5;"></div>
<div class="t" style="left:1146.5px;top:776.32px;font-size:11.300px;line-height:11.300px;color:#222;transform:translateX(-50%) scaleX(0.9983);transform-origin:center center;">2. Prüfaufforderung</div>
<div class="t" style="left:1350.5px;top:776.32px;font-size:11.300px;line-height:11.300px;color:#222;transform:translateX(-50%) scaleX(0.9549);transform-origin:center center;">2. Mahnung</div>
<div class="t" style="left:1044.3px;top:792.32px;font-size:11.300px;line-height:11.300px;color:#222;transform:translateX(-50%) scaleX(0.9983);transform-origin:center center;">1. Prüfaufforderung</div>
<div class="t" style="left:1248.7px;top:792.32px;font-size:11.300px;line-height:11.300px;color:#222;transform:translateX(-50%) scaleX(0.9549);transform-origin:center center;">1. Mahnung</div>
<div class="r" style="left:973px;top:814px;width:133px;height:20px;background:#c01a39;"></div>
<svg class="r" style="left:976px;top:816px;" width="16" height="16" viewBox="0 0 16 16"><rect x="0.5" y="0.5" width="15" height="15" fill="#f4f4f4" stroke="#9a9a9a" stroke-width="1"/><rect x="2" y="8" width="2.5" height="6" fill="#f5c400"/><rect x="5" y="3" width="2.5" height="11" fill="#3cab2e"/><rect x="8" y="9" width="2.5" height="5" fill="#2c6ad0"/><rect x="11" y="5" width="2.5" height="9" fill="#d61c24"/><rect x="1.5" y="13.5" width="13" height="1" fill="#555"/></svg>
<div class="t" style="left:996.2px;top:820.03px;font-size:12.000px;line-height:12.000px;color:#fff;transform: scaleX(0.9863);transform-origin:left center;">Statistiken (Aktuell)</div>
<svg class="r" style="left:1399px;top:822px;" width="10" height="9" viewBox="0 0 10 9"><path d="M1 1 L9 8 M9 1 L1 8" stroke="#1d3f8f" stroke-width="1.6"/></svg>
<div class="r" style="left:32px;top:814px;width:70px;height:20px;background:#c01a39;"></div>
<svg class="r" style="left:35px;top:816px;" width="16" height="17" viewBox="0 0 16 17"><rect x="1" y="1" width="12" height="14" fill="#f2f2f2" stroke="#bbb" stroke-width="0.6"/><rect x="3" y="5" width="6" height="1" fill="#cc3399"/><rect x="3" y="9" width="6" height="1" fill="#cc3399"/><circle cx="11" cy="11" r="3" fill="#eee" stroke="#888" stroke-width="0.8"/><path d="M13 13 L15 15.5" stroke="#333" stroke-width="1.3"/></svg>
<div class="t" style="left:54.8px;top:820.03px;font-size:12.000px;line-height:12.000px;color:#fff;font-weight:bold;transform: scaleX(0.9459);transform-origin:left center;">Suchen</div>
<svg class="r" style="left:949px;top:821px;" width="10" height="9" viewBox="0 0 10 9"><path d="M1 1 L9 8 M9 1 L1 8" stroke="#1d3f8f" stroke-width="1.6"/></svg>
<div class="r" style="left:27px;top:811px;width:937px;height:1px;background:#c6c6c6;"></div>
<div class="r" style="left:0px;top:834px;width:1440px;height:23px;background:#c01a39;"></div>
<div class="t" style="left:3.3px;top:841.83px;font-size:12.000px;line-height:12.000px;color:#fff;transform: scaleX(0.9567);transform-origin:left center;">Bereit</div>
<div class="r" style="left:1127px;top:838px;width:16px;height:16px;background:#8a1228;"></div>
<div class="t" style="left:1135px;top:842.03px;font-size:9.000px;line-height:9.000px;color:#fff;font-weight:bold;transform:translateX(-50%);transform-origin:center center;">DE</div>
<svg class="r" style="left:1146px;top:837px;" width="19" height="18" viewBox="0 0 19 18"><path d="M9.5 1.5 L11.8 6.6 L17.3 7.1 L13.1 10.7 L14.4 16.1 L9.5 13.2 L4.6 16.1 L5.9 10.7 L1.7 7.1 L7.2 6.6Z" fill="none" stroke="#fff" stroke-width="1.3"/></svg>
<div class="t" style="left:1170.7px;top:842.17px;font-size:11.600px;line-height:11.600px;color:#fff;transform: scaleX(0.9919);transform-origin:left center;">Meier, Karl</div>
<div class="t" style="left:1233.3px;top:842.17px;font-size:11.600px;line-height:11.600px;color:#fff;transform: scaleX(0.9528);transform-origin:left center;">IQSNB98</div>
<div class="t" style="left:1287.3px;top:842.17px;font-size:11.600px;line-height:11.600px;color:#fff;transform: scaleX(1.0326);transform-origin:left center;">plant 001</div>
<div class="r" style="left:1346.7px;top:848px;width:4px;height:1.2px;background:#ffffff;"></div>
<div class="r" style="left:1352.2px;top:848px;width:4px;height:1.2px;background:#ffffff;"></div>
<div class="t" style="left:1362.7px;top:841.83px;font-size:12.000px;line-height:12.000px;color:#fff;transform: scaleX(0.9994);transform-origin:left center;">Produktiv</div>
</body></html>
